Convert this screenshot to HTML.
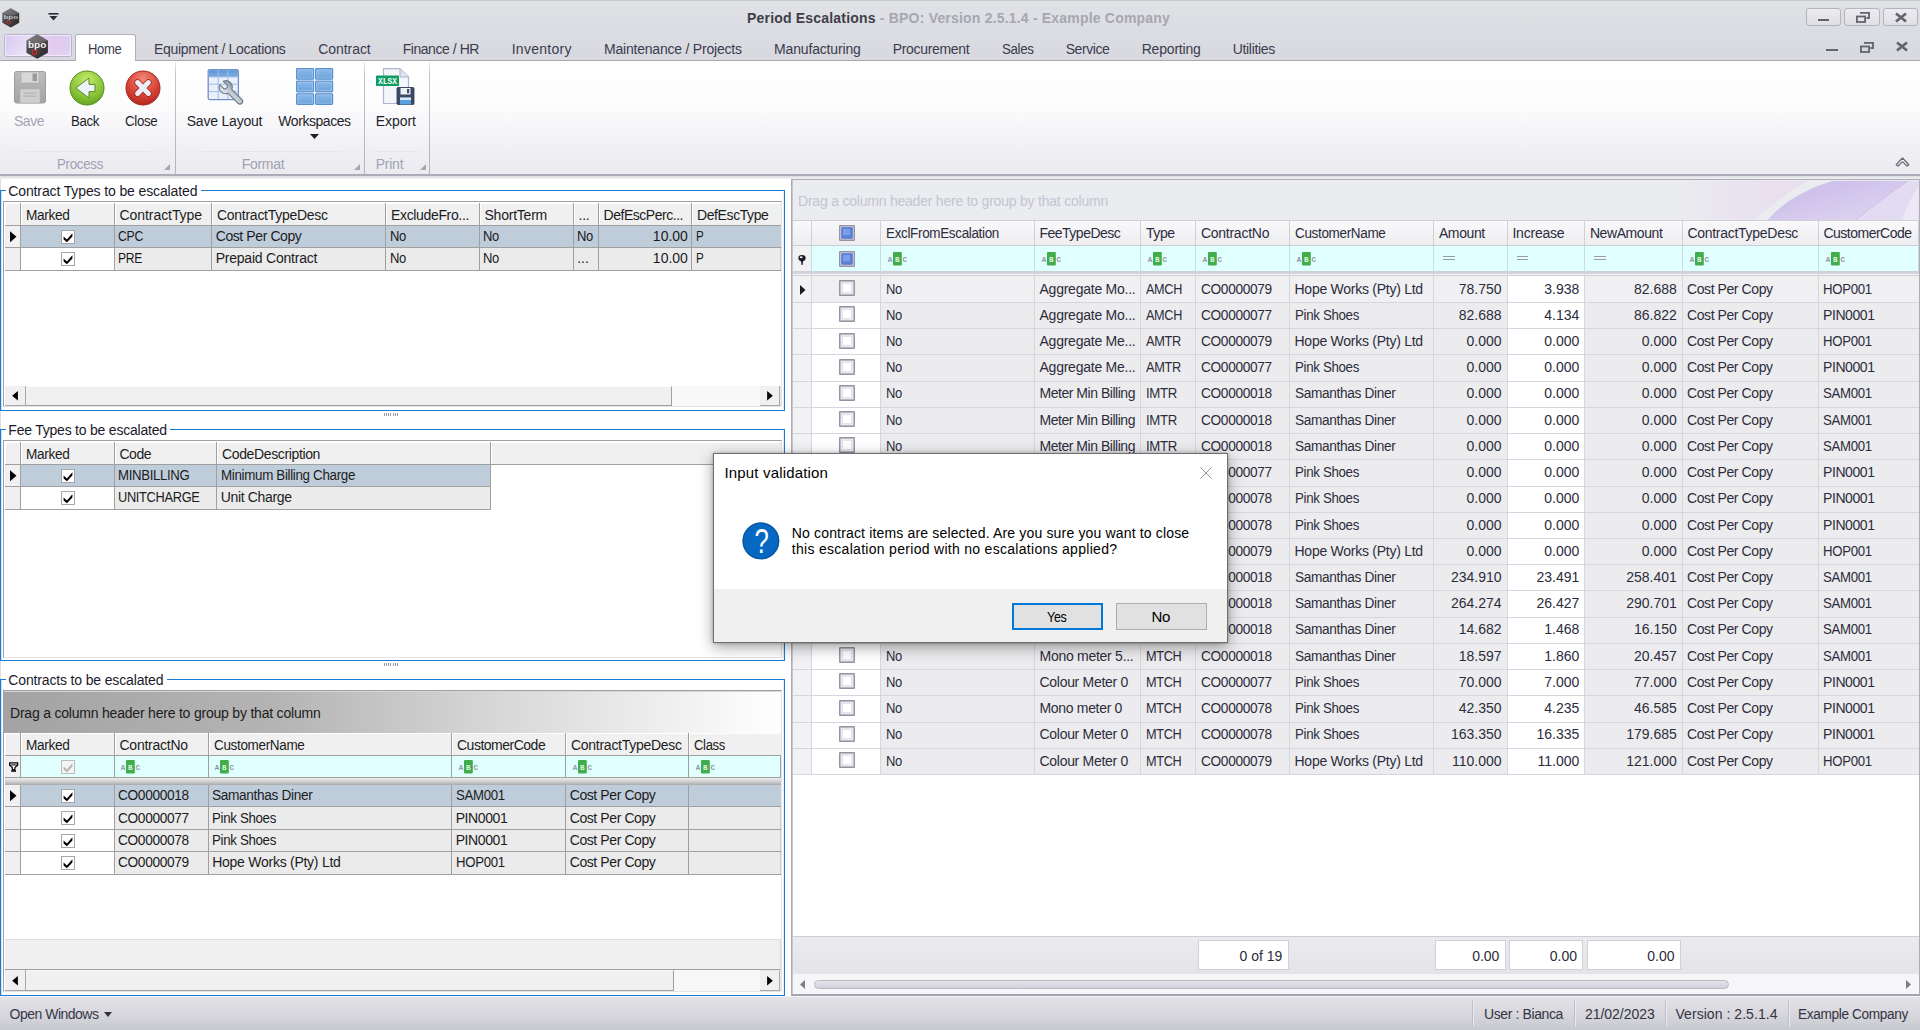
<!DOCTYPE html><html><head><meta charset="utf-8"><title>Period Escalations</title><style>
*{box-sizing:border-box;margin:0;padding:0}
html,body{width:1920px;height:1030px;overflow:hidden;background:#fff}
body{font-family:"Liberation Sans",sans-serif;font-size:14px;color:#1c1c1c;position:relative}
div{position:absolute}
.t{white-space:nowrap}
svg{position:absolute;overflow:visible}
</style></head><body>
<div style="left:0px;top:0px;width:1920px;height:61px;background:linear-gradient(#e1e2e6,#dcdde2 30px,#d8d9de 60px);"></div>
<div style="left:0px;top:0px;width:1920px;height:1px;background:#c9c9cf"></div>
<div style="left:0px;top:60px;width:1920px;height:1px;background:#a9a9b5"></div>
<svg style="left:2.4px;top:7.5px" width="17.5" height="19.8" viewBox="0 0 20 22.6"><defs><linearGradient id="hx2" x1="0" y1="0" x2="0.6" y2="1"><stop offset="0" stop-color="#7c7c7e"/><stop offset=".45" stop-color="#4c4c4e"/><stop offset="1" stop-color="#343436"/></linearGradient></defs><path d="M10 0.3 L19.6 5.8 L19.6 16.8 L10 22.3 L0.4 16.8 L0.4 5.8 Z" fill="url(#hx2)"/><path d="M10 0.3 L19.6 5.8 L10 9 L0.4 5.8Z" fill="#8e8e90" opacity=".45"/><path d="M10 22.3 L19.6 16.8 L19.6 5.8 L15 12Z" fill="#2a2a2c" opacity=".35"/><text x="10" y="12.6" font-family="Liberation Sans, sans-serif" font-weight="bold" font-size="7" fill="#c9c9c9" text-anchor="middle" textLength="16.5" lengthAdjust="spacingAndGlyphs">bpo</text><circle cx="7.6" cy="16.4" r="2" fill="none" stroke="#cc2a2a" stroke-width="1.1"/></svg>
<svg style="left:48px;top:13px" width="11" height="8" viewBox="0 0 11 8"><rect x="0.5" y="0" width="10" height="1.6" fill="#2a2a3c"/><path d="M1.5 3 L9.5 3 L5.5 7.6Z" fill="#2a2a3c"/></svg>
<div style="left:3.5px;top:34.3px;width:68px;height:23px;border:1px solid #b6b3ca;border-radius:2.5px;background:linear-gradient(#ddd0f0,#e0d6f4 50%,#ebe4f9 100%);"></div>
<div style="left:4.5px;top:35.3px;width:66px;height:21px;border:1px solid rgba(245,240,252,.8);border-radius:2px;background:linear-gradient(90deg,rgba(214,196,240,.5),rgba(240,232,250,.5) 35%,rgba(226,196,236,.75) 75%,rgba(220,200,240,.5))"></div>
<svg style="left:26px;top:33.8px" width="22.3" height="25.2" viewBox="0 0 20 22.6"><defs><linearGradient id="hx26" x1="0" y1="0" x2="0.6" y2="1"><stop offset="0" stop-color="#7c7c7e"/><stop offset=".45" stop-color="#4c4c4e"/><stop offset="1" stop-color="#343436"/></linearGradient></defs><path d="M10 0.3 L19.6 5.8 L19.6 16.8 L10 22.3 L0.4 16.8 L0.4 5.8 Z" fill="url(#hx26)"/><path d="M10 0.3 L19.6 5.8 L10 9 L0.4 5.8Z" fill="#8e8e90" opacity=".45"/><path d="M10 22.3 L19.6 16.8 L19.6 5.8 L15 12Z" fill="#2a2a2c" opacity=".35"/><text x="10" y="12.6" font-family="Liberation Sans, sans-serif" font-weight="bold" font-size="7.6" fill="#f2f2f2" text-anchor="middle" textLength="16.5" lengthAdjust="spacingAndGlyphs">bpo</text><circle cx="7.6" cy="16.4" r="2" fill="none" stroke="#cc2a2a" stroke-width="1.1"/></svg>
<div style="left:75px;top:34px;width:61px;height:28px;background:#fff;border:1px solid #b0b0bd;border-bottom:none;border-radius:3px 3px 0 0"></div>
<div class="t" style="letter-spacing:-0.35px;transform:scaleX(0.9316);transform-origin:0 0;left:88px;top:39.5px;line-height:18px;color:#3b3b4f">Home</div>
<div class="t" style="letter-spacing:-0.335px;left:154px;top:39.5px;line-height:18px;color:#3b3b4f">Equipment / Locations</div>
<div class="t" style="letter-spacing:-0.065px;left:318.3px;top:39.5px;line-height:18px;color:#3b3b4f">Contract</div>
<div class="t" style="letter-spacing:-0.450px;left:402.7px;top:39.5px;line-height:18px;color:#3b3b4f">Finance / HR</div>
<div class="t" style="letter-spacing:0.267px;left:511.7px;top:39.5px;line-height:18px;color:#3b3b4f">Inventory</div>
<div class="t" style="letter-spacing:-0.214px;left:604px;top:39.5px;line-height:18px;color:#3b3b4f">Maintenance / Projects</div>
<div class="t" style="letter-spacing:-0.155px;left:774px;top:39.5px;line-height:18px;color:#3b3b4f">Manufacturing</div>
<div class="t" style="letter-spacing:-0.323px;left:892.7px;top:39.5px;line-height:18px;color:#3b3b4f">Procurement</div>
<div class="t" style="letter-spacing:-0.35px;transform:scaleX(0.9495);transform-origin:0 0;left:1001.7px;top:39.5px;line-height:18px;color:#3b3b4f">Sales</div>
<div class="t" style="letter-spacing:-0.441px;left:1065.7px;top:39.5px;line-height:18px;color:#3b3b4f">Service</div>
<div class="t" style="letter-spacing:-0.189px;left:1141.7px;top:39.5px;line-height:18px;color:#3b3b4f">Reporting</div>
<div class="t" style="letter-spacing:-0.314px;left:1232.7px;top:39.5px;line-height:18px;color:#3b3b4f">Utilities</div>
<div class="t" style="letter-spacing:0.193px;left:747px;top:8.5px;line-height:18px;font-weight:bold;font-size:14px;color:#a6a6b1"><span style="color:#3e3e4a">Period Escalations</span> - BPO: Version 2.5.1.4 - Example Company</div>
<div style="left:1805.5px;top:7.5px;width:35px;height:18.5px;border:1px solid #b3b3bd;border-radius:3px;background:linear-gradient(#ececf0,#dfdfe4)"></div>
<div style="left:1844px;top:7.5px;width:35.5px;height:18.5px;border:1px solid #b3b3bd;border-radius:3px;background:linear-gradient(#ececf0,#dfdfe4)"></div>
<div style="left:1883px;top:7.5px;width:35px;height:18.5px;border:1px solid #b3b3bd;border-radius:3px;background:linear-gradient(#ececf0,#dfdfe4)"></div>
<div style="left:1817.5px;top:18.5px;width:11.5px;height:2.6px;background:#63636f"></div>
<svg style="left:1855.5px;top:11.5px" width="14" height="11" viewBox="0 0 14 11"><path d="M4 0.9 H13 V6 H10.5" fill="none" stroke="#63636f" stroke-width="1.8"/><rect x="0.9" y="4.5" width="8.2" height="5.5" fill="none" stroke="#63636f" stroke-width="1.8"/></svg>
<svg style="left:1894.5px;top:12.5px" width="12" height="9" viewBox="0 0 12 9"><path d="M1 0.5 L11 8.5 M11 0.5 L1 8.5" stroke="#63636f" stroke-width="2.7"/></svg>
<div style="left:1826px;top:48.5px;width:11.5px;height:2.6px;background:#63636f"></div>
<svg style="left:1860px;top:41.5px" width="14" height="11" viewBox="0 0 14 11"><path d="M4 0.9 H13 V6 H10.5" fill="none" stroke="#63636f" stroke-width="1.8"/><rect x="0.9" y="4.5" width="8.2" height="5.5" fill="none" stroke="#63636f" stroke-width="1.8"/></svg>
<svg style="left:1896px;top:42.2px" width="12" height="9" viewBox="0 0 12 9"><path d="M1 0.5 L11 8.5 M11 0.5 L1 8.5" stroke="#63636f" stroke-width="2.7"/></svg>
<div style="left:0px;top:179px;width:1px;height:817px;background:#dedede"></div>
<div style="left:0px;top:61px;width:1920px;height:113px;background:linear-gradient(#ffffff,#fdfdfe 35%,#f3f3f6 70%,#eaeaef 100%)"></div>
<div style="left:0px;top:173.5px;width:1920px;height:2px;background:#abacb8"></div>
<div style="left:0px;top:175.5px;width:1920px;height:3.5px;background:linear-gradient(#dcdce2,#f2f2f5)"></div>
<div style="left:175.0px;top:62px;width:1px;height:112px;background:linear-gradient(#e6e6ec,#c3c3cd 12%,#b4b4bf 100%)"></div>
<div style="left:364.0px;top:62px;width:1px;height:112px;background:linear-gradient(#e6e6ec,#c3c3cd 12%,#b4b4bf 100%)"></div>
<div style="left:428.8px;top:62px;width:1px;height:112px;background:linear-gradient(#e6e6ec,#c3c3cd 12%,#b4b4bf 100%)"></div>
<div style="left:8px;top:151px;width:160px;height:1px;background:linear-gradient(90deg,rgba(225,225,232,0),#e3e3ea 20%,#e3e3ea 80%,rgba(225,225,232,0))"></div>
<div style="left:184px;top:151px;width:174px;height:1px;background:linear-gradient(90deg,rgba(225,225,232,0),#e3e3ea 20%,#e3e3ea 80%,rgba(225,225,232,0))"></div>
<div style="left:372px;top:151px;width:51px;height:1px;background:linear-gradient(90deg,rgba(225,225,232,0),#e3e3ea 20%,#e3e3ea 80%,rgba(225,225,232,0))"></div>
<div class="t" style="letter-spacing:-0.35px;transform:scaleX(0.9558);transform-origin:0 0;left:56.7px;top:155px;line-height:18px;color:#a1a1b1">Process</div>
<div class="t" style="letter-spacing:-0.291px;left:241.7px;top:155px;line-height:18px;color:#a1a1b1">Format</div>
<div class="t" style="letter-spacing:-0.239px;left:375.7px;top:155px;line-height:18px;color:#a1a1b1">Print</div>
<svg style="left:164px;top:164px" width="6" height="6" viewBox="0 0 6 6"><path d="M6 0 V6 H0Z" fill="#a5a5b0"/></svg>
<svg style="left:354px;top:164px" width="6" height="6" viewBox="0 0 6 6"><path d="M6 0 V6 H0Z" fill="#a5a5b0"/></svg>
<svg style="left:419.5px;top:164px" width="6" height="6" viewBox="0 0 6 6"><path d="M6 0 V6 H0Z" fill="#a5a5b0"/></svg>
<div class="t" style="letter-spacing:-0.480px;left:14px;top:112px;line-height:18px;color:#a5a5b2">Save</div>
<div class="t" style="letter-spacing:-0.35px;transform:scaleX(0.9420);transform-origin:0 0;left:71.3px;top:112px;line-height:18px;color:#1f1f2b">Back</div>
<div class="t" style="letter-spacing:-0.35px;transform:scaleX(0.9516);transform-origin:0 0;left:125.3px;top:112px;line-height:18px;color:#1f1f2b">Close</div>
<div class="t" style="letter-spacing:-0.204px;left:186.7px;top:112px;line-height:18px;color:#1f1f2b">Save Layout</div>
<div class="t" style="letter-spacing:-0.438px;left:278.3px;top:112px;line-height:18px;color:#1f1f2b">Workspaces</div>
<div class="t" style="letter-spacing:-0.028px;left:375.7px;top:112px;line-height:18px;color:#1f1f2b">Export</div>
<svg style="left:310px;top:133.5px" width="9" height="5" viewBox="0 0 9 5"><path d="M0 0 H9 L4.5 5Z" fill="#1f1f2b"/></svg>
<svg style="left:1895px;top:155.5px" width="15" height="11" viewBox="0 0 15 11"><path d="M1.2 8.8 L7.5 2 L13.8 8.8 L12 10 L7.5 5.6 L3 10Z" fill="#fff" stroke="#6a6a78" stroke-width="1.3" stroke-linejoin="round"/></svg>
<svg style="left:14px;top:71px" width="32" height="33" viewBox="0 0 32 33"><defs><linearGradient id="fl" x1="0" y1="0" x2="0" y2="1"><stop offset="0" stop-color="#bdbdbd"/><stop offset="1" stop-color="#a4a4a4"/></linearGradient></defs><rect x="0.5" y="0.5" width="31" height="31.5" rx="2" fill="url(#fl)" stroke="#9c9c9c"/><rect x="7" y="1" width="18" height="11" fill="#d8d8d8" stroke="#a8a8a8" stroke-width=".6"/><rect x="18.5" y="2.5" width="4.5" height="7.5" fill="#9a9a9a"/><rect x="6" y="18" width="20" height="14" fill="#cfcfcf" stroke="#b0b0b0" stroke-width=".6"/><rect x="9.5" y="21.5" width="13" height="1.3" fill="#b4b4b4"/><rect x="9.5" y="24.5" width="13" height="1.3" fill="#b4b4b4"/></svg>
<svg style="left:68.5px;top:69.6px" width="36" height="36" viewBox="0 0 36 36"><defs><radialGradient id="gr" cx=".5" cy=".25" r=".8"><stop offset="0" stop-color="#c4e868"/><stop offset=".6" stop-color="#8cc63a"/><stop offset="1" stop-color="#5e9e1e"/></radialGradient></defs><circle cx="18" cy="18" r="17" fill="url(#gr)" stroke="#4f8a1a" stroke-width="1"/><path d="M6.8 18 L20 8 V14.4 H26 V21.6 H20 V28Z" fill="#eef3fb" stroke="#4f8f1c" stroke-width="1" stroke-linejoin="round"/></svg>
<svg style="left:124.5px;top:69.6px" width="36" height="36" viewBox="0 0 36 36"><defs><radialGradient id="rd" cx=".5" cy=".25" r=".8"><stop offset="0" stop-color="#f0897a"/><stop offset=".55" stop-color="#d9463a"/><stop offset="1" stop-color="#b0241a"/></radialGradient></defs><circle cx="18" cy="18" r="17" fill="url(#rd)" stroke="#a3241c" stroke-width="1"/><path d="M12.6 12.6 L23.4 23.4 M23.4 12.6 L12.6 23.4" stroke="#b3281f" stroke-width="6.6" stroke-linecap="round"/><path d="M12.6 12.6 L23.4 23.4 M23.4 12.6 L12.6 23.4" stroke="#eaeef6" stroke-width="5" stroke-linecap="round"/></svg>
<svg style="left:207px;top:68px" width="38" height="38" viewBox="0 0 38 38"><defs><linearGradient id="tb" x1="0" y1="0" x2="0" y2="1"><stop offset="0" stop-color="#5f9ad8"/><stop offset="1" stop-color="#86b6e6"/></linearGradient><linearGradient id="wr" x1="0" y1="0" x2="1" y2="0"><stop offset="0" stop-color="#e6eaef"/><stop offset=".5" stop-color="#c3cbd5"/><stop offset="1" stop-color="#8d97a5"/></linearGradient></defs><rect x="1.2" y="1.6" width="30.2" height="30" rx="1.6" fill="#e9f0fa" stroke="#7590c8" stroke-width="1.3"/><rect x="1.9" y="2.3" width="28.8" height="6.6" fill="#71a5de"/><rect x="1.9" y="2.3" width="28.8" height="2.4" fill="#639bd8"/><path d="M1.9 8.9 H30.7 M1.9 16.2 H30.7 M1.9 23.6 H30.7 M11.2 2.3 V31 M20.8 2.3 V31" stroke="#a3bce2" stroke-width="1"/><g transform="translate(18.8 19.2) rotate(-45)"><path d="M-2.4 -1.2 L-2.4 -6 A6.4 6.4 0 0 0 -2.7 5.8 L-2.7 20 A2.7 2.7 0 0 0 2.7 20 L2.7 5.8 A6.4 6.4 0 0 0 2.4 -6 L2.4 -1.2 A2.4 2.4 0 0 1 -2.4 -1.2Z" fill="url(#wr)" stroke="#707b8a" stroke-width="1.1" stroke-linejoin="round"/></g></svg>
<svg style="left:296px;top:68.2px" width="37" height="37" viewBox="0 0 37 37"><defs><linearGradient id="ws" x1="0" y1="0" x2="0" y2="1"><stop offset="0" stop-color="#8dbaea"/><stop offset="1" stop-color="#6aa2dc"/></linearGradient></defs><rect x="0.6" y="0.6" width="17" height="10.6" rx=".8" fill="url(#ws)" stroke="#5a90d0" stroke-width="1.2"/><rect x="1.8" y="1.8" width="14.6" height="8.2" fill="none" stroke="#a5c8ee" stroke-width=".8" opacity=".8"/><rect x="19.6" y="0.6" width="17" height="10.6" rx=".8" fill="url(#ws)" stroke="#5a90d0" stroke-width="1.2"/><rect x="20.8" y="1.8" width="14.6" height="8.2" fill="none" stroke="#a5c8ee" stroke-width=".8" opacity=".8"/><rect x="0.6" y="13.2" width="17" height="10.6" rx=".8" fill="url(#ws)" stroke="#5a90d0" stroke-width="1.2"/><rect x="1.8" y="14.4" width="14.6" height="8.2" fill="none" stroke="#a5c8ee" stroke-width=".8" opacity=".8"/><rect x="19.6" y="13.2" width="17" height="10.6" rx=".8" fill="url(#ws)" stroke="#5a90d0" stroke-width="1.2"/><rect x="20.8" y="14.4" width="14.6" height="8.2" fill="none" stroke="#a5c8ee" stroke-width=".8" opacity=".8"/><rect x="0.6" y="25.8" width="17" height="10.6" rx=".8" fill="url(#ws)" stroke="#5a90d0" stroke-width="1.2"/><rect x="1.8" y="27.0" width="14.6" height="8.2" fill="none" stroke="#a5c8ee" stroke-width=".8" opacity=".8"/><rect x="19.6" y="25.8" width="17" height="10.6" rx=".8" fill="url(#ws)" stroke="#5a90d0" stroke-width="1.2"/><rect x="20.8" y="27.0" width="14.6" height="8.2" fill="none" stroke="#a5c8ee" stroke-width=".8" opacity=".8"/></svg>
<svg style="left:376px;top:68px" width="39" height="38" viewBox="0 0 39 38"><path d="M7.5 0.7 H24 L32.5 9 V35.5 H7.5Z" fill="#f4f6fb" stroke="#aab4cc" stroke-width="1.2"/><path d="M24 0.7 V9 H32.5" fill="#dfe4f0" stroke="#aab4cc" stroke-width="1"/><rect x="0" y="7.5" width="23" height="10.5" rx=".8" fill="#0f9d62"/><text x="11.5" y="15.8" font-family="Liberation Mono, monospace" font-weight="bold" font-size="8.6" fill="#fff" text-anchor="middle" textLength="19" lengthAdjust="spacingAndGlyphs">XLSX</text><rect x="21" y="19.5" width="17" height="17" rx="1" fill="#3d4a66" stroke="#2b3650" stroke-width=".8"/><rect x="24.5" y="20" width="10" height="6.5" fill="#eef2f8"/><rect x="31" y="21" width="2.2" height="4.2" fill="#3d4a66"/><rect x="24" y="29.5" width="11" height="7" fill="#5b9fe0"/><rect x="24" y="29.5" width="11" height="2.5" fill="#d8e8f8"/></svg>
<div style="left:0px;top:190px;width:6px;height:1px;background:#1c7ad6"></div>
<div style="left:200.5px;top:190px;width:584.5px;height:1px;background:#1c7ad6"></div>
<div style="left:0px;top:190px;width:1px;height:221px;background:#1c7ad6"></div>
<div style="left:784px;top:190px;width:1px;height:221px;background:#1c7ad6"></div>
<div style="left:0px;top:410px;width:785px;height:1px;background:#1c7ad6"></div>
<div style="left:1px;top:191px;width:1px;height:219px;background:#cfe3f7"></div>
<div style="left:783px;top:191px;width:1px;height:219px;background:#e2eefa"></div>
<div class="t" style="letter-spacing:-0.125px;top:182.25px;line-height:18px;color:#1a1a2a;left:8.3px;">Contract Types to be escalated</div>
<div style="left:3px;top:201px;width:778.5px;height:206px;border:1px solid #a0a0a0;border-right-color:#e3e3e3;border-bottom-color:#e3e3e3;background:#fff"></div>
<div style="left:4.5px;top:202.5px;width:776.0px;height:22.5px;background:#f0f0f0"></div>
<div style="left:4.5px;top:225.0px;width:776.0px;height:1px;background:#a0a0a0"></div>
<div style="left:19.5px;top:202.5px;width:1px;height:22.5px;background:#a0a0a0"></div>
<div style="left:5.0px;top:202.5px;width:1px;height:22.5px;background:#fff"></div>
<div style="left:5.0px;top:202.5px;width:14.5px;height:1px;background:#fff"></div>
<div style="left:113.5px;top:202.5px;width:1px;height:22.5px;background:#a0a0a0"></div>
<div style="left:20.5px;top:202.5px;width:1px;height:22.5px;background:#fff"></div>
<div style="left:20.5px;top:202.5px;width:93px;height:1px;background:#fff"></div>
<div class="t" style="letter-spacing:-0.35px;transform:scaleX(0.9756);transform-origin:0 0;top:205.85px;line-height:18px;left:25.5px;">Marked</div>
<div style="left:211.0px;top:202.5px;width:1px;height:22.5px;background:#a0a0a0"></div>
<div style="left:114.5px;top:202.5px;width:1px;height:22.5px;background:#fff"></div>
<div style="left:114.5px;top:202.5px;width:96.5px;height:1px;background:#fff"></div>
<div class="t" style="letter-spacing:-0.064px;top:205.85px;line-height:18px;left:119.5px;">ContractType</div>
<div style="left:385.0px;top:202.5px;width:1px;height:22.5px;background:#a0a0a0"></div>
<div style="left:212.0px;top:202.5px;width:1px;height:22.5px;background:#fff"></div>
<div style="left:212.0px;top:202.5px;width:173.0px;height:1px;background:#fff"></div>
<div class="t" style="letter-spacing:-0.273px;top:205.85px;line-height:18px;left:217.0px;">ContractTypeDesc</div>
<div style="left:478.5px;top:202.5px;width:1px;height:22.5px;background:#a0a0a0"></div>
<div style="left:386.0px;top:202.5px;width:1px;height:22.5px;background:#fff"></div>
<div style="left:386.0px;top:202.5px;width:92.5px;height:1px;background:#fff"></div>
<div class="t" style="letter-spacing:-0.345px;top:205.85px;line-height:18px;left:391.0px;">ExcludeFro...</div>
<div style="left:572.5px;top:202.5px;width:1px;height:22.5px;background:#a0a0a0"></div>
<div style="left:479.5px;top:202.5px;width:1px;height:22.5px;background:#fff"></div>
<div style="left:479.5px;top:202.5px;width:93px;height:1px;background:#fff"></div>
<div class="t" style="letter-spacing:-0.231px;top:205.85px;line-height:18px;left:484.5px;">ShortTerm</div>
<div style="left:597.5px;top:202.5px;width:1px;height:22.5px;background:#a0a0a0"></div>
<div style="left:573.5px;top:202.5px;width:1px;height:22.5px;background:#fff"></div>
<div style="left:573.5px;top:202.5px;width:24px;height:1px;background:#fff"></div>
<div class="t" style="letter-spacing:-0.224px;top:205.85px;line-height:18px;left:578.5px;">...</div>
<div style="left:691.0px;top:202.5px;width:1px;height:22.5px;background:#a0a0a0"></div>
<div style="left:598.5px;top:202.5px;width:1px;height:22.5px;background:#fff"></div>
<div style="left:598.5px;top:202.5px;width:92.5px;height:1px;background:#fff"></div>
<div class="t" style="letter-spacing:-0.469px;top:205.85px;line-height:18px;left:603.5px;">DefEscPerc...</div>
<div style="left:692.0px;top:202.5px;width:1px;height:22.5px;background:#fff"></div>
<div style="left:692.0px;top:202.5px;width:88.0px;height:1px;background:#fff"></div>
<div class="t" style="letter-spacing:-0.398px;top:205.85px;line-height:18px;left:697.0px;">DefEscType</div>
<div style="left:4.5px;top:226px;width:776.0px;height:21.3px;background:#bfcddb"></div>
<div style="left:4.5px;top:226px;width:15.5px;height:21.3px;background:#f0f0f0"></div>
<svg style="left:9.7px;top:231px" width="6.5" height="11.5" viewBox="0 0 7 12"><path d="M0 0 L7 6 L0 12Z" fill="#000"/></svg>
<svg style="left:61px;top:230px" width="14" height="14" viewBox="0 0 14 14"><rect x=".5" y=".5" width="13" height="13" fill="#fff" stroke="#a6a6a6"/><path d="M2.6 6.4 L5.9 9.4 L11.4 3.2 L11.4 6.4 L5.9 12.3 L2.6 9.4Z" fill="#000"/></svg>
<div style="left:19.5px;top:226px;width:1px;height:21.3px;background:#a0a0a0"></div>
<div style="left:113.5px;top:226px;width:1px;height:21.3px;background:#a0a0a0"></div>
<div style="left:211.0px;top:226px;width:1px;height:21.3px;background:#a0a0a0"></div>
<div style="left:385.0px;top:226px;width:1px;height:21.3px;background:#a0a0a0"></div>
<div style="left:478.5px;top:226px;width:1px;height:21.3px;background:#a0a0a0"></div>
<div style="left:572.5px;top:226px;width:1px;height:21.3px;background:#a0a0a0"></div>
<div style="left:597.5px;top:226px;width:1px;height:21.3px;background:#a0a0a0"></div>
<div style="left:691.0px;top:226px;width:1px;height:21.3px;background:#a0a0a0"></div>
<div style="left:780.0px;top:226px;width:1px;height:21.3px;background:#cfcfcf"></div>
<div class="t" style="letter-spacing:-0.35px;transform:scaleX(0.8768);transform-origin:0 0;top:227.15px;line-height:18px;left:118.2px;">CPC</div>
<div class="t" style="letter-spacing:-0.404px;top:227.15px;line-height:18px;left:215.7px;">Cost Per Copy</div>
<div class="t" style="letter-spacing:-0.35px;transform:scaleX(0.9299);transform-origin:0 0;top:227.15px;line-height:18px;left:389.7px;">No</div>
<div class="t" style="letter-spacing:-0.35px;transform:scaleX(0.9299);transform-origin:0 0;top:227.15px;line-height:18px;left:483.2px;">No</div>
<div class="t" style="letter-spacing:-0.35px;transform:scaleX(0.9299);transform-origin:0 0;top:227.15px;line-height:18px;left:577.2px;">No</div>
<div class="t" style="top:227.15px;line-height:18px;right:1232.1px;">10.00</div>
<div class="t" style="letter-spacing:-0.35px;transform:scaleX(0.8339);transform-origin:0 0;top:227.15px;line-height:18px;left:695.7px;">P</div>
<div style="left:4.5px;top:247.3px;width:776.0px;height:1px;background:#a0a0a0"></div>
<div style="left:4.5px;top:248.3px;width:776.0px;height:21.3px;background:#ebebeb"></div>
<div style="left:4.5px;top:248.3px;width:15.5px;height:21.3px;background:#f0f0f0"></div>
<div style="left:20px;top:248.3px;width:94px;height:21.3px;background:#fff"></div>
<svg style="left:61px;top:252.3px" width="14" height="14" viewBox="0 0 14 14"><rect x=".5" y=".5" width="13" height="13" fill="#fff" stroke="#a6a6a6"/><path d="M2.6 6.4 L5.9 9.4 L11.4 3.2 L11.4 6.4 L5.9 12.3 L2.6 9.4Z" fill="#000"/></svg>
<div style="left:19.5px;top:248.3px;width:1px;height:21.3px;background:#a0a0a0"></div>
<div style="left:113.5px;top:248.3px;width:1px;height:21.3px;background:#a0a0a0"></div>
<div style="left:211.0px;top:248.3px;width:1px;height:21.3px;background:#a0a0a0"></div>
<div style="left:385.0px;top:248.3px;width:1px;height:21.3px;background:#a0a0a0"></div>
<div style="left:478.5px;top:248.3px;width:1px;height:21.3px;background:#a0a0a0"></div>
<div style="left:572.5px;top:248.3px;width:1px;height:21.3px;background:#a0a0a0"></div>
<div style="left:597.5px;top:248.3px;width:1px;height:21.3px;background:#a0a0a0"></div>
<div style="left:691.0px;top:248.3px;width:1px;height:21.3px;background:#a0a0a0"></div>
<div style="left:780.0px;top:248.3px;width:1px;height:21.3px;background:#cfcfcf"></div>
<div class="t" style="letter-spacing:-0.35px;transform:scaleX(0.8650);transform-origin:0 0;top:249.45px;line-height:18px;left:118.2px;">PRE</div>
<div class="t" style="letter-spacing:-0.223px;top:249.45px;line-height:18px;left:215.7px;">Prepaid Contract</div>
<div class="t" style="letter-spacing:-0.35px;transform:scaleX(0.9299);transform-origin:0 0;top:249.45px;line-height:18px;left:389.7px;">No</div>
<div class="t" style="letter-spacing:-0.35px;transform:scaleX(0.9299);transform-origin:0 0;top:249.45px;line-height:18px;left:483.2px;">No</div>
<div class="t" style="top:249.45px;line-height:18px;left:577.2px;">...</div>
<div class="t" style="top:249.45px;line-height:18px;right:1232.1px;">10.00</div>
<div class="t" style="letter-spacing:-0.35px;transform:scaleX(0.8339);transform-origin:0 0;top:249.45px;line-height:18px;left:695.7px;">P</div>
<div style="left:4.5px;top:269.6px;width:776.0px;height:1px;background:#a0a0a0"></div>
<div style="left:4.5px;top:385.5px;width:776px;height:20px;background:#e8e8e8"></div>
<div style="left:672px;top:385.5px;width:87.5px;height:20px;background:#f8f8f8"></div>
<div style="left:4.5px;top:385.5px;width:21px;height:20px;background:#f0f0f0;border-right:1px solid #a8a8a8;border-bottom:1px solid #a8a8a8"></div>
<div style="left:25.5px;top:385.5px;width:646.5px;height:20px;background:#f0f0f0;border-right:1px solid #a0a0a0;border-bottom:1px solid #a0a0a0;border-top:1px solid #fafafa"></div>
<div style="left:759.5px;top:386.0px;width:20.5px;height:19.5px;background:#f0f0f0;border-right:1px solid #a8a8a8;border-bottom:1px solid #a8a8a8"></div>
<svg style="left:12px;top:390.8px" width="6" height="9.5" viewBox="0 0 6 10"><path d="M6 0 L0 5 L6 10Z" fill="#000"/></svg>
<svg style="left:767px;top:390.8px" width="6" height="9.5" viewBox="0 0 6 10"><path d="M0 0 L6 5 L0 10Z" fill="#000"/></svg>
<div style="left:383.5px;top:413px;width:1px;height:2.6px;background:#9a9aa8"></div>
<div style="left:385.8px;top:413px;width:1px;height:2.6px;background:#9a9aa8"></div>
<div style="left:388.1px;top:413px;width:1px;height:2.6px;background:#9a9aa8"></div>
<div style="left:390.4px;top:413px;width:1px;height:2.6px;background:#9a9aa8"></div>
<div style="left:392.7px;top:413px;width:1px;height:2.6px;background:#9a9aa8"></div>
<div style="left:395.0px;top:413px;width:1px;height:2.6px;background:#9a9aa8"></div>
<div style="left:397.3px;top:413px;width:1px;height:2.6px;background:#9a9aa8"></div>
<div style="left:0px;top:429px;width:6px;height:1px;background:#1c7ad6"></div>
<div style="left:170.0px;top:429px;width:615.0px;height:1px;background:#1c7ad6"></div>
<div style="left:0px;top:429px;width:1px;height:232px;background:#1c7ad6"></div>
<div style="left:784px;top:429px;width:1px;height:232px;background:#1c7ad6"></div>
<div style="left:0px;top:660px;width:785px;height:1px;background:#1c7ad6"></div>
<div style="left:1px;top:430px;width:1px;height:230px;background:#cfe3f7"></div>
<div style="left:783px;top:430px;width:1px;height:230px;background:#e2eefa"></div>
<div class="t" style="letter-spacing:-0.219px;top:421.25px;line-height:18px;color:#1a1a2a;left:8.3px;">Fee Types to be escalated</div>
<div style="left:3px;top:440px;width:778.5px;height:217.5px;border:1px solid #a0a0a0;border-right-color:#e3e3e3;border-bottom-color:#e3e3e3;background:#fff"></div>
<div style="left:4.5px;top:441.5px;width:776.0px;height:22.5px;background:#f0f0f0"></div>
<div style="left:4.5px;top:464.0px;width:776.0px;height:1px;background:#a0a0a0"></div>
<div style="left:19.5px;top:441.5px;width:1px;height:22.5px;background:#a0a0a0"></div>
<div style="left:5.0px;top:441.5px;width:1px;height:22.5px;background:#fff"></div>
<div style="left:5.0px;top:441.5px;width:14.5px;height:1px;background:#fff"></div>
<div style="left:113.5px;top:441.5px;width:1px;height:22.5px;background:#a0a0a0"></div>
<div style="left:20.5px;top:441.5px;width:1px;height:22.5px;background:#fff"></div>
<div style="left:20.5px;top:441.5px;width:93px;height:1px;background:#fff"></div>
<div class="t" style="letter-spacing:-0.35px;transform:scaleX(0.9756);transform-origin:0 0;top:444.85px;line-height:18px;left:25.5px;">Marked</div>
<div style="left:216.0px;top:441.5px;width:1px;height:22.5px;background:#a0a0a0"></div>
<div style="left:114.5px;top:441.5px;width:1px;height:22.5px;background:#fff"></div>
<div style="left:114.5px;top:441.5px;width:101.5px;height:1px;background:#fff"></div>
<div class="t" style="letter-spacing:-0.492px;top:444.85px;line-height:18px;left:119.5px;">Code</div>
<div style="left:490.0px;top:441.5px;width:1px;height:22.5px;background:#a0a0a0"></div>
<div style="left:217.0px;top:441.5px;width:1px;height:22.5px;background:#fff"></div>
<div style="left:217.0px;top:441.5px;width:273.0px;height:1px;background:#fff"></div>
<div class="t" style="letter-spacing:-0.367px;top:444.85px;line-height:18px;left:222.0px;">CodeDescription</div>
<div style="left:491.0px;top:441.5px;width:1px;height:22.5px;background:#fff"></div>
<div style="left:491.0px;top:441.5px;width:289.0px;height:1px;background:#fff"></div>
<div style="left:4.5px;top:465px;width:486.0px;height:21.3px;background:#bfcddb"></div>
<div style="left:4.5px;top:465px;width:15.5px;height:21.3px;background:#f0f0f0"></div>
<svg style="left:9.7px;top:470px" width="6.5" height="11.5" viewBox="0 0 7 12"><path d="M0 0 L7 6 L0 12Z" fill="#000"/></svg>
<svg style="left:61px;top:469px" width="14" height="14" viewBox="0 0 14 14"><rect x=".5" y=".5" width="13" height="13" fill="#fff" stroke="#a6a6a6"/><path d="M2.6 6.4 L5.9 9.4 L11.4 3.2 L11.4 6.4 L5.9 12.3 L2.6 9.4Z" fill="#000"/></svg>
<div style="left:19.5px;top:465px;width:1px;height:21.3px;background:#a0a0a0"></div>
<div style="left:113.5px;top:465px;width:1px;height:21.3px;background:#a0a0a0"></div>
<div style="left:216.0px;top:465px;width:1px;height:21.3px;background:#a0a0a0"></div>
<div style="left:490.0px;top:465px;width:1px;height:21.3px;background:#a0a0a0"></div>
<div class="t" style="letter-spacing:-0.35px;transform:scaleX(0.9425);transform-origin:0 0;top:466.15px;line-height:18px;left:118.2px;">MINBILLING</div>
<div class="t" style="letter-spacing:-0.35px;transform:scaleX(0.9563);transform-origin:0 0;top:466.15px;line-height:18px;left:220.7px;">Minimum Billing Charge</div>
<div style="left:4.5px;top:486.3px;width:486.0px;height:1px;background:#a0a0a0"></div>
<div style="left:4.5px;top:487.3px;width:486.0px;height:21.3px;background:#ebebeb"></div>
<div style="left:4.5px;top:487.3px;width:15.5px;height:21.3px;background:#f0f0f0"></div>
<div style="left:20px;top:487.3px;width:94px;height:21.3px;background:#fff"></div>
<svg style="left:61px;top:491.3px" width="14" height="14" viewBox="0 0 14 14"><rect x=".5" y=".5" width="13" height="13" fill="#fff" stroke="#a6a6a6"/><path d="M2.6 6.4 L5.9 9.4 L11.4 3.2 L11.4 6.4 L5.9 12.3 L2.6 9.4Z" fill="#000"/></svg>
<div style="left:19.5px;top:487.3px;width:1px;height:21.3px;background:#a0a0a0"></div>
<div style="left:113.5px;top:487.3px;width:1px;height:21.3px;background:#a0a0a0"></div>
<div style="left:216.0px;top:487.3px;width:1px;height:21.3px;background:#a0a0a0"></div>
<div style="left:490.0px;top:487.3px;width:1px;height:21.3px;background:#a0a0a0"></div>
<div class="t" style="letter-spacing:-0.35px;transform:scaleX(0.9151);transform-origin:0 0;top:488.45px;line-height:18px;left:118.2px;">UNITCHARGE</div>
<div class="t" style="letter-spacing:-0.337px;top:488.45px;line-height:18px;left:220.7px;">Unit Charge</div>
<div style="left:4.5px;top:508.6px;width:486.0px;height:1px;background:#a0a0a0"></div>
<div style="left:383.5px;top:663px;width:1px;height:2.6px;background:#9a9aa8"></div>
<div style="left:385.8px;top:663px;width:1px;height:2.6px;background:#9a9aa8"></div>
<div style="left:388.1px;top:663px;width:1px;height:2.6px;background:#9a9aa8"></div>
<div style="left:390.4px;top:663px;width:1px;height:2.6px;background:#9a9aa8"></div>
<div style="left:392.7px;top:663px;width:1px;height:2.6px;background:#9a9aa8"></div>
<div style="left:395.0px;top:663px;width:1px;height:2.6px;background:#9a9aa8"></div>
<div style="left:397.3px;top:663px;width:1px;height:2.6px;background:#9a9aa8"></div>
<div style="left:0px;top:679px;width:6px;height:1px;background:#1c7ad6"></div>
<div style="left:166.5px;top:679px;width:618.5px;height:1px;background:#1c7ad6"></div>
<div style="left:0px;top:679px;width:1px;height:317px;background:#1c7ad6"></div>
<div style="left:784px;top:679px;width:1px;height:317px;background:#1c7ad6"></div>
<div style="left:0px;top:995px;width:785px;height:1px;background:#1c7ad6"></div>
<div style="left:1px;top:680px;width:1px;height:315px;background:#cfe3f7"></div>
<div style="left:783px;top:680px;width:1px;height:315px;background:#e2eefa"></div>
<div class="t" style="letter-spacing:-0.151px;top:671.25px;line-height:18px;color:#1a1a2a;left:8.3px;">Contracts to be escalated</div>
<div style="left:3px;top:690px;width:778.5px;height:302px;border:1px solid #a0a0a0;border-right-color:#e3e3e3;border-bottom-color:#e3e3e3;background:#fff"></div>
<div style="left:4px;top:691px;width:776.5px;height:42px;border-top:1px solid #d6d6d6;background:linear-gradient(90deg,#a3a3a3 0%,#b4b4b4 35%,#d9d9d9 65%,#f4f4f4 90%,#ffffff 100%)"></div>
<div class="t" style="letter-spacing:-0.207px;top:704.45px;line-height:18px;color:#1b1b1b;left:10.0px;">Drag a column header here to group by that column</div>
<div style="left:4.5px;top:733px;width:776px;height:22px;background:#f0f0f0"></div>
<div style="left:4.5px;top:755px;width:776px;height:1px;background:#a0a0a0"></div>
<div style="left:19.5px;top:733px;width:1px;height:22px;background:#a0a0a0"></div>
<div style="left:5.0px;top:733px;width:1px;height:22px;background:#fff"></div>
<div style="left:5.0px;top:733px;width:14.5px;height:1px;background:#fff"></div>
<div style="left:113.5px;top:733px;width:1px;height:22px;background:#a0a0a0"></div>
<div style="left:20.5px;top:733px;width:1px;height:22px;background:#fff"></div>
<div style="left:20.5px;top:733px;width:93px;height:1px;background:#fff"></div>
<div class="t" style="letter-spacing:-0.35px;transform:scaleX(0.9756);transform-origin:0 0;top:736.35px;line-height:18px;left:25.5px;">Marked</div>
<div style="left:207.5px;top:733px;width:1px;height:22px;background:#a0a0a0"></div>
<div style="left:114.5px;top:733px;width:1px;height:22px;background:#fff"></div>
<div style="left:114.5px;top:733px;width:93px;height:1px;background:#fff"></div>
<div class="t" style="letter-spacing:-0.251px;top:736.35px;line-height:18px;left:119.5px;">ContractNo</div>
<div style="left:451.0px;top:733px;width:1px;height:22px;background:#a0a0a0"></div>
<div style="left:208.5px;top:733px;width:1px;height:22px;background:#fff"></div>
<div style="left:208.5px;top:733px;width:242.5px;height:1px;background:#fff"></div>
<div class="t" style="letter-spacing:-0.35px;transform:scaleX(0.9645);transform-origin:0 0;top:736.35px;line-height:18px;left:213.5px;">CustomerName</div>
<div style="left:565.0px;top:733px;width:1px;height:22px;background:#a0a0a0"></div>
<div style="left:452.0px;top:733px;width:1px;height:22px;background:#fff"></div>
<div style="left:452.0px;top:733px;width:113.0px;height:1px;background:#fff"></div>
<div class="t" style="letter-spacing:-0.496px;top:736.35px;line-height:18px;left:457.0px;">CustomerCode</div>
<div style="left:688.0px;top:733px;width:1px;height:22px;background:#a0a0a0"></div>
<div style="left:566.0px;top:733px;width:1px;height:22px;background:#fff"></div>
<div style="left:566.0px;top:733px;width:122.0px;height:1px;background:#fff"></div>
<div class="t" style="letter-spacing:-0.273px;top:736.35px;line-height:18px;left:571.0px;">ContractTypeDesc</div>
<div style="left:689.0px;top:733px;width:1px;height:22px;background:#fff"></div>
<div style="left:689.0px;top:733px;width:91.0px;height:1px;background:#fff"></div>
<div class="t" style="letter-spacing:-0.35px;transform:scaleX(0.9319);transform-origin:0 0;top:736.35px;line-height:18px;left:694.0px;">Class</div>
<div style="left:4.5px;top:756px;width:776px;height:21px;background:#e0ffff"></div>
<div style="left:4.5px;top:756px;width:15.5px;height:21px;background:#f0f0f0"></div>
<div style="left:19.5px;top:756px;width:1px;height:21px;background:#a0a0a0"></div>
<div style="left:113.5px;top:756px;width:1px;height:21px;background:#a0a0a0"></div>
<div style="left:207.5px;top:756px;width:1px;height:21px;background:#a0a0a0"></div>
<div style="left:451.0px;top:756px;width:1px;height:21px;background:#a0a0a0"></div>
<div style="left:565.0px;top:756px;width:1px;height:21px;background:#a0a0a0"></div>
<div style="left:688.0px;top:756px;width:1px;height:21px;background:#a0a0a0"></div>
<div style="left:780.0px;top:756px;width:1px;height:21px;background:#a0a0a0"></div>
<div style="left:4.5px;top:777px;width:776px;height:1px;background:#a0a0a0"></div>
<svg style="left:61px;top:759.7px" width="14" height="14" viewBox="0 0 14 14"><rect x=".5" y=".5" width="13" height="13" fill="#f4f4f4" stroke="#bdbdbd"/><path d="M2.6 6.4 L5.9 9.4 L11.4 3.2 L11.4 6.4 L5.9 12.3 L2.6 9.4Z" fill="#b5b5b5"/></svg>
<svg style="left:120px;top:760px" width="20" height="14" viewBox="0 0 20 14"><rect x="6" y="0" width="8.8" height="13.6" rx="1" fill="#41ad4a"/><text x="3" y="9.8" font-family="Liberation Mono, monospace" font-weight="bold" font-size="7.6" fill="#9696a2" text-anchor="middle">A</text><text x="10.4" y="9.8" font-family="Liberation Mono, monospace" font-weight="bold" font-size="7.6" fill="#dff5e0" text-anchor="middle">B</text><text x="17.8" y="9.8" font-family="Liberation Mono, monospace" font-weight="bold" font-size="7.6" fill="#9696a2" text-anchor="middle">C</text></svg>
<svg style="left:214px;top:760px" width="20" height="14" viewBox="0 0 20 14"><rect x="6" y="0" width="8.8" height="13.6" rx="1" fill="#41ad4a"/><text x="3" y="9.8" font-family="Liberation Mono, monospace" font-weight="bold" font-size="7.6" fill="#9696a2" text-anchor="middle">A</text><text x="10.4" y="9.8" font-family="Liberation Mono, monospace" font-weight="bold" font-size="7.6" fill="#dff5e0" text-anchor="middle">B</text><text x="17.8" y="9.8" font-family="Liberation Mono, monospace" font-weight="bold" font-size="7.6" fill="#9696a2" text-anchor="middle">C</text></svg>
<svg style="left:457.5px;top:760px" width="20" height="14" viewBox="0 0 20 14"><rect x="6" y="0" width="8.8" height="13.6" rx="1" fill="#41ad4a"/><text x="3" y="9.8" font-family="Liberation Mono, monospace" font-weight="bold" font-size="7.6" fill="#9696a2" text-anchor="middle">A</text><text x="10.4" y="9.8" font-family="Liberation Mono, monospace" font-weight="bold" font-size="7.6" fill="#dff5e0" text-anchor="middle">B</text><text x="17.8" y="9.8" font-family="Liberation Mono, monospace" font-weight="bold" font-size="7.6" fill="#9696a2" text-anchor="middle">C</text></svg>
<svg style="left:571.5px;top:760px" width="20" height="14" viewBox="0 0 20 14"><rect x="6" y="0" width="8.8" height="13.6" rx="1" fill="#41ad4a"/><text x="3" y="9.8" font-family="Liberation Mono, monospace" font-weight="bold" font-size="7.6" fill="#9696a2" text-anchor="middle">A</text><text x="10.4" y="9.8" font-family="Liberation Mono, monospace" font-weight="bold" font-size="7.6" fill="#dff5e0" text-anchor="middle">B</text><text x="17.8" y="9.8" font-family="Liberation Mono, monospace" font-weight="bold" font-size="7.6" fill="#9696a2" text-anchor="middle">C</text></svg>
<svg style="left:694.5px;top:760px" width="20" height="14" viewBox="0 0 20 14"><rect x="6" y="0" width="8.8" height="13.6" rx="1" fill="#41ad4a"/><text x="3" y="9.8" font-family="Liberation Mono, monospace" font-weight="bold" font-size="7.6" fill="#9696a2" text-anchor="middle">A</text><text x="10.4" y="9.8" font-family="Liberation Mono, monospace" font-weight="bold" font-size="7.6" fill="#dff5e0" text-anchor="middle">B</text><text x="17.8" y="9.8" font-family="Liberation Mono, monospace" font-weight="bold" font-size="7.6" fill="#9696a2" text-anchor="middle">C</text></svg>
<svg style="left:8.5px;top:762.3px" width="9.3" height="10.2" viewBox="0 0 10 10.5"><path d="M0.7 0.7 H9.3 V3.2 L6.4 5.6 V8 H3.6 V5.6 L0.7 3.2Z" fill="#fff" stroke="#000" stroke-width="1.3"/><rect x="1.5" y="2.4" width="7" height="1.1" fill="#000"/><rect x="2.4" y="8.6" width="5.2" height="1.7" fill="#000"/></svg>
<div style="left:4.5px;top:778px;width:776px;height:7px;background:linear-gradient(#efefef,#d4d4d4 45%,#a9a9a9 100%)"></div>
<div style="left:4.5px;top:785px;width:776.0px;height:21.42px;background:#bfcddb"></div>
<div style="left:4.5px;top:785px;width:15.5px;height:21.42px;background:#f0f0f0"></div>
<svg style="left:9.7px;top:790px" width="6.5" height="11.5" viewBox="0 0 7 12"><path d="M0 0 L7 6 L0 12Z" fill="#000"/></svg>
<svg style="left:61px;top:789px" width="14" height="14" viewBox="0 0 14 14"><rect x=".5" y=".5" width="13" height="13" fill="#fff" stroke="#a6a6a6"/><path d="M2.6 6.4 L5.9 9.4 L11.4 3.2 L11.4 6.4 L5.9 12.3 L2.6 9.4Z" fill="#000"/></svg>
<div style="left:19.5px;top:785px;width:1px;height:21.42px;background:#a0a0a0"></div>
<div style="left:113.5px;top:785px;width:1px;height:21.42px;background:#a0a0a0"></div>
<div style="left:207.5px;top:785px;width:1px;height:21.42px;background:#a0a0a0"></div>
<div style="left:451.0px;top:785px;width:1px;height:21.42px;background:#a0a0a0"></div>
<div style="left:565.0px;top:785px;width:1px;height:21.42px;background:#a0a0a0"></div>
<div style="left:688.0px;top:785px;width:1px;height:21.42px;background:#a0a0a0"></div>
<div style="left:780.0px;top:785px;width:1px;height:21.42px;background:#cfcfcf"></div>
<div class="t" style="letter-spacing:-0.35px;transform:scaleX(0.9784);transform-origin:0 0;top:786.15px;line-height:18px;left:118.2px;">CO0000018</div>
<div class="t" style="letter-spacing:-0.35px;transform:scaleX(0.9765);transform-origin:0 0;top:786.15px;line-height:18px;left:212.2px;">Samanthas Diner</div>
<div class="t" style="letter-spacing:-0.35px;transform:scaleX(0.9437);transform-origin:0 0;top:786.15px;line-height:18px;left:455.7px;">SAM001</div>
<div class="t" style="letter-spacing:-0.404px;top:786.15px;line-height:18px;left:569.7px;">Cost Per Copy</div>
<div style="left:4.5px;top:806.42px;width:776.0px;height:1px;background:#a0a0a0"></div>
<div style="left:4.5px;top:807.42px;width:776.0px;height:21.42px;background:#ebebeb"></div>
<div style="left:4.5px;top:807.42px;width:15.5px;height:21.42px;background:#f0f0f0"></div>
<div style="left:20px;top:807.42px;width:94px;height:21.42px;background:#fff"></div>
<svg style="left:61px;top:811.42px" width="14" height="14" viewBox="0 0 14 14"><rect x=".5" y=".5" width="13" height="13" fill="#fff" stroke="#a6a6a6"/><path d="M2.6 6.4 L5.9 9.4 L11.4 3.2 L11.4 6.4 L5.9 12.3 L2.6 9.4Z" fill="#000"/></svg>
<div style="left:19.5px;top:807.42px;width:1px;height:21.42px;background:#a0a0a0"></div>
<div style="left:113.5px;top:807.42px;width:1px;height:21.42px;background:#a0a0a0"></div>
<div style="left:207.5px;top:807.42px;width:1px;height:21.42px;background:#a0a0a0"></div>
<div style="left:451.0px;top:807.42px;width:1px;height:21.42px;background:#a0a0a0"></div>
<div style="left:565.0px;top:807.42px;width:1px;height:21.42px;background:#a0a0a0"></div>
<div style="left:688.0px;top:807.42px;width:1px;height:21.42px;background:#a0a0a0"></div>
<div style="left:780.0px;top:807.42px;width:1px;height:21.42px;background:#cfcfcf"></div>
<div class="t" style="letter-spacing:-0.35px;transform:scaleX(0.9784);transform-origin:0 0;top:808.57px;line-height:18px;left:118.2px;">CO0000077</div>
<div class="t" style="letter-spacing:-0.35px;transform:scaleX(0.9506);transform-origin:0 0;top:808.57px;line-height:18px;left:212.2px;">Pink Shoes</div>
<div class="t" style="letter-spacing:-0.412px;top:808.57px;line-height:18px;left:455.7px;">PIN0001</div>
<div class="t" style="letter-spacing:-0.404px;top:808.57px;line-height:18px;left:569.7px;">Cost Per Copy</div>
<div style="left:4.5px;top:828.8399999999999px;width:776.0px;height:1px;background:#a0a0a0"></div>
<div style="left:4.5px;top:829.8399999999999px;width:776.0px;height:21.42px;background:#ebebeb"></div>
<div style="left:4.5px;top:829.8399999999999px;width:15.5px;height:21.42px;background:#f0f0f0"></div>
<div style="left:20px;top:829.8399999999999px;width:94px;height:21.42px;background:#fff"></div>
<svg style="left:61px;top:833.8399999999999px" width="14" height="14" viewBox="0 0 14 14"><rect x=".5" y=".5" width="13" height="13" fill="#fff" stroke="#a6a6a6"/><path d="M2.6 6.4 L5.9 9.4 L11.4 3.2 L11.4 6.4 L5.9 12.3 L2.6 9.4Z" fill="#000"/></svg>
<div style="left:19.5px;top:829.8399999999999px;width:1px;height:21.42px;background:#a0a0a0"></div>
<div style="left:113.5px;top:829.8399999999999px;width:1px;height:21.42px;background:#a0a0a0"></div>
<div style="left:207.5px;top:829.8399999999999px;width:1px;height:21.42px;background:#a0a0a0"></div>
<div style="left:451.0px;top:829.8399999999999px;width:1px;height:21.42px;background:#a0a0a0"></div>
<div style="left:565.0px;top:829.8399999999999px;width:1px;height:21.42px;background:#a0a0a0"></div>
<div style="left:688.0px;top:829.8399999999999px;width:1px;height:21.42px;background:#a0a0a0"></div>
<div style="left:780.0px;top:829.8399999999999px;width:1px;height:21.42px;background:#cfcfcf"></div>
<div class="t" style="letter-spacing:-0.35px;transform:scaleX(0.9784);transform-origin:0 0;top:830.99px;line-height:18px;left:118.2px;">CO0000078</div>
<div class="t" style="letter-spacing:-0.35px;transform:scaleX(0.9506);transform-origin:0 0;top:830.99px;line-height:18px;left:212.2px;">Pink Shoes</div>
<div class="t" style="letter-spacing:-0.412px;top:830.99px;line-height:18px;left:455.7px;">PIN0001</div>
<div class="t" style="letter-spacing:-0.404px;top:830.99px;line-height:18px;left:569.7px;">Cost Per Copy</div>
<div style="left:4.5px;top:851.2599999999999px;width:776.0px;height:1px;background:#a0a0a0"></div>
<div style="left:4.5px;top:852.2599999999999px;width:776.0px;height:21.42px;background:#ebebeb"></div>
<div style="left:4.5px;top:852.2599999999999px;width:15.5px;height:21.42px;background:#f0f0f0"></div>
<div style="left:20px;top:852.2599999999999px;width:94px;height:21.42px;background:#fff"></div>
<svg style="left:61px;top:856.2599999999999px" width="14" height="14" viewBox="0 0 14 14"><rect x=".5" y=".5" width="13" height="13" fill="#fff" stroke="#a6a6a6"/><path d="M2.6 6.4 L5.9 9.4 L11.4 3.2 L11.4 6.4 L5.9 12.3 L2.6 9.4Z" fill="#000"/></svg>
<div style="left:19.5px;top:852.2599999999999px;width:1px;height:21.42px;background:#a0a0a0"></div>
<div style="left:113.5px;top:852.2599999999999px;width:1px;height:21.42px;background:#a0a0a0"></div>
<div style="left:207.5px;top:852.2599999999999px;width:1px;height:21.42px;background:#a0a0a0"></div>
<div style="left:451.0px;top:852.2599999999999px;width:1px;height:21.42px;background:#a0a0a0"></div>
<div style="left:565.0px;top:852.2599999999999px;width:1px;height:21.42px;background:#a0a0a0"></div>
<div style="left:688.0px;top:852.2599999999999px;width:1px;height:21.42px;background:#a0a0a0"></div>
<div style="left:780.0px;top:852.2599999999999px;width:1px;height:21.42px;background:#cfcfcf"></div>
<div class="t" style="letter-spacing:-0.35px;transform:scaleX(0.9784);transform-origin:0 0;top:853.41px;line-height:18px;left:118.2px;">CO0000079</div>
<div class="t" style="letter-spacing:-0.258px;top:853.41px;line-height:18px;left:212.2px;">Hope Works (Pty) Ltd</div>
<div class="t" style="letter-spacing:-0.35px;transform:scaleX(0.9437);transform-origin:0 0;top:853.41px;line-height:18px;left:455.7px;">HOP001</div>
<div class="t" style="letter-spacing:-0.404px;top:853.41px;line-height:18px;left:569.7px;">Cost Per Copy</div>
<div style="left:4.5px;top:873.6799999999998px;width:776.0px;height:1px;background:#a0a0a0"></div>
<div style="left:4.5px;top:938.5px;width:776px;height:31.5px;background:#f0f0f0;border-top:1px solid #dcdcdc;border-bottom:1px solid #a0a0a0;border-right:1px solid #dcdcdc"></div>
<div style="left:4.5px;top:970px;width:776px;height:20.5px;background:#e8e8e8"></div>
<div style="left:674px;top:970px;width:85.5px;height:20.5px;background:#f8f8f8"></div>
<div style="left:4.5px;top:970px;width:21px;height:20.5px;background:#f0f0f0;border-right:1px solid #a8a8a8;border-bottom:1px solid #a8a8a8"></div>
<div style="left:25.5px;top:970px;width:648.5px;height:20.5px;background:#f0f0f0;border-right:1px solid #a0a0a0;border-bottom:1px solid #a0a0a0;border-top:1px solid #fafafa"></div>
<div style="left:759.5px;top:970.5px;width:20.5px;height:20.0px;background:#f0f0f0;border-right:1px solid #a8a8a8;border-bottom:1px solid #a8a8a8"></div>
<svg style="left:12px;top:975.55px" width="6" height="9.5" viewBox="0 0 6 10"><path d="M6 0 L0 5 L6 10Z" fill="#000"/></svg>
<svg style="left:767px;top:975.55px" width="6" height="9.5" viewBox="0 0 6 10"><path d="M0 0 L6 5 L0 10Z" fill="#000"/></svg>
<div style="left:791px;top:179px;width:1129px;height:817px;border:2px solid #adadb9;border-right-width:1.5px;border-bottom-width:2px;border-bottom-color:#a4a4b0;border-top-width:1.5px;background:#fff"></div>
<div style="left:792px;top:180px;width:1px;height:814px;background:#c6c6d0"></div>
<div style="left:792.5px;top:180px;width:1126px;height:40.5px;background:#ebecf0"></div>
<svg style="left:1680px;top:180.5px" width="238.5" height="39.5" viewBox="0 0 238.5 40" preserveAspectRatio="none"><defs><linearGradient id="swp" x1="0" y1="0" x2="1" y2="0"><stop offset="0" stop-color="#ead9f0" stop-opacity="0"/><stop offset=".35" stop-color="#e9d8ef" stop-opacity=".4"/><stop offset="1" stop-color="#e6d4ee" stop-opacity=".6"/></linearGradient><linearGradient id="swb" x1="0" y1="0" x2="1" y2="1"><stop offset="0" stop-color="#d3c8ed"/><stop offset=".3" stop-color="#cec1eb"/><stop offset="1" stop-color="#e0d9f1"/></linearGradient></defs><path d="M0 0 H127.5 Q98 18 74 40 H0Z" fill="url(#swp)"/><path d="M152.5 0 Q110 13 87 40 H175 Q200 19 228 0Z" fill="url(#swb)"/><path d="M228 0 Q200 19 175 40 H238.5 V0Z" fill="#e3dbf1"/><path d="M228 0 Q200 19 175 40" fill="none" stroke="#d2c3ec" stroke-width="1.2"/><path d="M238.5 6 Q228 20 222 40 H238.5Z" fill="#ece8f5"/></svg>
<div class="t" style="letter-spacing:-0.217px;top:191.95px;line-height:18px;color:#c3c4d0;left:798.0px;">Drag a column header here to group by that column</div>
<div style="left:792.5px;top:220px;width:1126px;height:25.5px;background:linear-gradient(#fafafb,#ededf0)"></div>
<div style="left:792.5px;top:220px;width:1126px;height:1px;background:#cfcfd8"></div>
<div style="left:792.5px;top:245.5px;width:1126px;height:1px;background:#cfcfd8"></div>
<div style="left:811.0px;top:220px;width:1px;height:25.5px;background:#cfcfd8"></div>
<div style="left:880.0px;top:220px;width:1px;height:25.5px;background:#cfcfd8"></div>
<div style="left:1033.5px;top:220px;width:1px;height:25.5px;background:#cfcfd8"></div>
<div class="t" style="letter-spacing:-0.35px;transform:scaleX(0.9625);transform-origin:0 0;top:223.65px;line-height:18px;color:#2c2c3c;left:885.9px;">ExclFromEscalation</div>
<div style="left:1140.0px;top:220px;width:1px;height:25.5px;background:#cfcfd8"></div>
<div class="t" style="letter-spacing:-0.489px;top:223.65px;line-height:18px;color:#2c2c3c;left:1039.4px;">FeeTypeDesc</div>
<div style="left:1195.0px;top:220px;width:1px;height:25.5px;background:#cfcfd8"></div>
<div class="t" style="letter-spacing:-0.390px;top:223.65px;line-height:18px;color:#2c2c3c;left:1145.9px;">Type</div>
<div style="left:1288.8px;top:220px;width:1px;height:25.5px;background:#cfcfd8"></div>
<div class="t" style="letter-spacing:-0.251px;top:223.65px;line-height:18px;color:#2c2c3c;left:1200.9px;">ContractNo</div>
<div style="left:1433.0px;top:220px;width:1px;height:25.5px;background:#cfcfd8"></div>
<div class="t" style="letter-spacing:-0.35px;transform:scaleX(0.9645);transform-origin:0 0;top:223.65px;line-height:18px;color:#2c2c3c;left:1294.7px;">CustomerName</div>
<div style="left:1506.5px;top:220px;width:1px;height:25.5px;background:#cfcfd8"></div>
<div class="t" style="letter-spacing:-0.375px;top:223.65px;line-height:18px;color:#2c2c3c;left:1438.9px;">Amount</div>
<div style="left:1584.0px;top:220px;width:1px;height:25.5px;background:#cfcfd8"></div>
<div class="t" style="letter-spacing:-0.213px;top:223.65px;line-height:18px;color:#2c2c3c;left:1512.4px;">Increase</div>
<div style="left:1681.5px;top:220px;width:1px;height:25.5px;background:#cfcfd8"></div>
<div class="t" style="letter-spacing:-0.418px;top:223.65px;line-height:18px;color:#2c2c3c;left:1589.9px;">NewAmount</div>
<div style="left:1817.5px;top:220px;width:1px;height:25.5px;background:#cfcfd8"></div>
<div class="t" style="letter-spacing:-0.279px;top:223.65px;line-height:18px;color:#2c2c3c;left:1687.4px;">ContractTypeDesc</div>
<div style="left:1918.0px;top:220px;width:1px;height:25.5px;background:#cfcfd8"></div>
<div class="t" style="letter-spacing:-0.496px;top:223.65px;line-height:18px;color:#2c2c3c;left:1823.4px;">CustomerCode</div>
<svg style="left:839px;top:225px" width="16" height="16" viewBox="0 0 16 16"><rect x=".7" y=".7" width="14.6" height="14.6" rx=".4" fill="#dfdfe7" stroke="#9494a2" stroke-width="1.4"/><rect x="2.6" y="2.6" width="10.8" height="10.8" fill="none" stroke="#ececf2" stroke-width="1"/><rect x="3.9" y="3.9" width="8.2" height="8.2" fill="#fff"/><rect x="2.8" y="2.8" width="10.4" height="10.4" fill="#5f84dc" stroke="#4468c8" stroke-width=".9"/><rect x="4" y="4" width="7" height="6" fill="#86a6ee" opacity=".75"/></svg>
<div style="left:792.5px;top:246px;width:1126px;height:25.3px;background:#e0ffff"></div>
<div style="left:792.5px;top:246px;width:19px;height:25.3px;background:#f2f2f5"></div>
<div style="left:811.0px;top:246px;width:1px;height:25.3px;background:#cfd9e2"></div>
<div style="left:880.0px;top:246px;width:1px;height:25.3px;background:#cfd9e2"></div>
<div style="left:1033.5px;top:246px;width:1px;height:25.3px;background:#cfd9e2"></div>
<div style="left:1140.0px;top:246px;width:1px;height:25.3px;background:#cfd9e2"></div>
<div style="left:1195.0px;top:246px;width:1px;height:25.3px;background:#cfd9e2"></div>
<div style="left:1288.8px;top:246px;width:1px;height:25.3px;background:#cfd9e2"></div>
<div style="left:1433.0px;top:246px;width:1px;height:25.3px;background:#cfd9e2"></div>
<div style="left:1506.5px;top:246px;width:1px;height:25.3px;background:#cfd9e2"></div>
<div style="left:1584.0px;top:246px;width:1px;height:25.3px;background:#cfd9e2"></div>
<div style="left:1681.5px;top:246px;width:1px;height:25.3px;background:#cfd9e2"></div>
<div style="left:1817.5px;top:246px;width:1px;height:25.3px;background:#cfd9e2"></div>
<div style="left:1918.0px;top:246px;width:1px;height:25.3px;background:#cfd9e2"></div>
<div style="left:792.5px;top:245px;width:1126px;height:1px;background:#cdcdd6"></div>
<svg style="left:839px;top:250.5px" width="16" height="16" viewBox="0 0 16 16"><rect x=".7" y=".7" width="14.6" height="14.6" rx=".4" fill="#dfdfe7" stroke="#9494a2" stroke-width="1.4"/><rect x="2.6" y="2.6" width="10.8" height="10.8" fill="none" stroke="#ececf2" stroke-width="1"/><rect x="3.9" y="3.9" width="8.2" height="8.2" fill="#fff"/><rect x="2.8" y="2.8" width="10.4" height="10.4" fill="#5f84dc" stroke="#4468c8" stroke-width=".9"/><rect x="4" y="4" width="7" height="6" fill="#86a6ee" opacity=".75"/></svg>
<svg style="left:887.0px;top:252.2px" width="20" height="14" viewBox="0 0 20 14"><rect x="6" y="0" width="8.8" height="13.6" rx="1" fill="#41ad4a"/><text x="3" y="9.8" font-family="Liberation Mono, monospace" font-weight="bold" font-size="7.6" fill="#9696a2" text-anchor="middle">A</text><text x="10.4" y="9.8" font-family="Liberation Mono, monospace" font-weight="bold" font-size="7.6" fill="#dff5e0" text-anchor="middle">B</text><text x="17.8" y="9.8" font-family="Liberation Mono, monospace" font-weight="bold" font-size="7.6" fill="#9696a2" text-anchor="middle">C</text></svg>
<svg style="left:1040.5px;top:252.2px" width="20" height="14" viewBox="0 0 20 14"><rect x="6" y="0" width="8.8" height="13.6" rx="1" fill="#41ad4a"/><text x="3" y="9.8" font-family="Liberation Mono, monospace" font-weight="bold" font-size="7.6" fill="#9696a2" text-anchor="middle">A</text><text x="10.4" y="9.8" font-family="Liberation Mono, monospace" font-weight="bold" font-size="7.6" fill="#dff5e0" text-anchor="middle">B</text><text x="17.8" y="9.8" font-family="Liberation Mono, monospace" font-weight="bold" font-size="7.6" fill="#9696a2" text-anchor="middle">C</text></svg>
<svg style="left:1147.0px;top:252.2px" width="20" height="14" viewBox="0 0 20 14"><rect x="6" y="0" width="8.8" height="13.6" rx="1" fill="#41ad4a"/><text x="3" y="9.8" font-family="Liberation Mono, monospace" font-weight="bold" font-size="7.6" fill="#9696a2" text-anchor="middle">A</text><text x="10.4" y="9.8" font-family="Liberation Mono, monospace" font-weight="bold" font-size="7.6" fill="#dff5e0" text-anchor="middle">B</text><text x="17.8" y="9.8" font-family="Liberation Mono, monospace" font-weight="bold" font-size="7.6" fill="#9696a2" text-anchor="middle">C</text></svg>
<svg style="left:1202.0px;top:252.2px" width="20" height="14" viewBox="0 0 20 14"><rect x="6" y="0" width="8.8" height="13.6" rx="1" fill="#41ad4a"/><text x="3" y="9.8" font-family="Liberation Mono, monospace" font-weight="bold" font-size="7.6" fill="#9696a2" text-anchor="middle">A</text><text x="10.4" y="9.8" font-family="Liberation Mono, monospace" font-weight="bold" font-size="7.6" fill="#dff5e0" text-anchor="middle">B</text><text x="17.8" y="9.8" font-family="Liberation Mono, monospace" font-weight="bold" font-size="7.6" fill="#9696a2" text-anchor="middle">C</text></svg>
<svg style="left:1295.8px;top:252.2px" width="20" height="14" viewBox="0 0 20 14"><rect x="6" y="0" width="8.8" height="13.6" rx="1" fill="#41ad4a"/><text x="3" y="9.8" font-family="Liberation Mono, monospace" font-weight="bold" font-size="7.6" fill="#9696a2" text-anchor="middle">A</text><text x="10.4" y="9.8" font-family="Liberation Mono, monospace" font-weight="bold" font-size="7.6" fill="#dff5e0" text-anchor="middle">B</text><text x="17.8" y="9.8" font-family="Liberation Mono, monospace" font-weight="bold" font-size="7.6" fill="#9696a2" text-anchor="middle">C</text></svg>
<div style="left:1443.0px;top:255.6px;width:11.5px;height:1.2px;background:#9a9aa4"></div>
<div style="left:1443.0px;top:259.3px;width:11.5px;height:1.2px;background:#9a9aa4"></div>
<div style="left:1516.5px;top:255.6px;width:11.5px;height:1.2px;background:#9a9aa4"></div>
<div style="left:1516.5px;top:259.3px;width:11.5px;height:1.2px;background:#9a9aa4"></div>
<div style="left:1594.0px;top:255.6px;width:11.5px;height:1.2px;background:#9a9aa4"></div>
<div style="left:1594.0px;top:259.3px;width:11.5px;height:1.2px;background:#9a9aa4"></div>
<svg style="left:1688.5px;top:252.2px" width="20" height="14" viewBox="0 0 20 14"><rect x="6" y="0" width="8.8" height="13.6" rx="1" fill="#41ad4a"/><text x="3" y="9.8" font-family="Liberation Mono, monospace" font-weight="bold" font-size="7.6" fill="#9696a2" text-anchor="middle">A</text><text x="10.4" y="9.8" font-family="Liberation Mono, monospace" font-weight="bold" font-size="7.6" fill="#dff5e0" text-anchor="middle">B</text><text x="17.8" y="9.8" font-family="Liberation Mono, monospace" font-weight="bold" font-size="7.6" fill="#9696a2" text-anchor="middle">C</text></svg>
<svg style="left:1824.5px;top:252.2px" width="20" height="14" viewBox="0 0 20 14"><rect x="6" y="0" width="8.8" height="13.6" rx="1" fill="#41ad4a"/><text x="3" y="9.8" font-family="Liberation Mono, monospace" font-weight="bold" font-size="7.6" fill="#9696a2" text-anchor="middle">A</text><text x="10.4" y="9.8" font-family="Liberation Mono, monospace" font-weight="bold" font-size="7.6" fill="#dff5e0" text-anchor="middle">B</text><text x="17.8" y="9.8" font-family="Liberation Mono, monospace" font-weight="bold" font-size="7.6" fill="#9696a2" text-anchor="middle">C</text></svg>
<svg style="left:798px;top:254.5px" width="8" height="10" viewBox="0 0 8 10"><ellipse cx="4" cy="3" rx="3.7" ry="3" fill="#1c1c26"/><ellipse cx="3.2" cy="2.2" rx="1.5" ry="1" fill="#e8e8ee"/><path d="M1.4 5 L4 7.4 L6.6 5Z" fill="#1c1c26"/><rect x="3.3" y="5.5" width="1.5" height="4.3" fill="#1c1c26"/></svg>
<div style="left:792.5px;top:271px;width:1126px;height:3px;background:linear-gradient(#cdcdd6,#d6d6de)"></div>
<div style="left:792.5px;top:274px;width:1126px;height:1px;background:#f4f4f7"></div>
<div style="left:792.5px;top:275px;width:1126px;height:1px;background:#d0d0d9"></div>
<div style="left:792.5px;top:276px;width:1126px;height:27px;background:#f0f0f2"></div>
<div style="left:792.5px;top:276px;width:19px;height:27px;background:#f2f2f5"></div>
<div style="left:1507px;top:276px;width:77.5px;height:27px;background:#fff"></div>
<div style="left:792.5px;top:302px;width:1126px;height:1px;background:#d6d6de"></div>
<svg style="left:839px;top:280px" width="16" height="16" viewBox="0 0 16 16"><rect x=".7" y=".7" width="14.6" height="14.6" rx=".4" fill="#dfdfe7" stroke="#9494a2" stroke-width="1.4"/><rect x="2.6" y="2.6" width="10.8" height="10.8" fill="none" stroke="#ececf2" stroke-width="1"/><rect x="3.9" y="3.9" width="8.2" height="8.2" fill="#fff"/></svg>
<div class="t" style="letter-spacing:-0.35px;transform:scaleX(0.9299);transform-origin:0 0;top:279.60px;line-height:18px;color:#2c2c3c;left:885.8px;">No</div>
<div class="t" style="letter-spacing:-0.242px;top:279.60px;line-height:18px;color:#2c2c3c;left:1039.5px;">Aggregate Mo...</div>
<div class="t" style="letter-spacing:-0.35px;transform:scaleX(0.9037);transform-origin:0 0;top:279.60px;line-height:18px;color:#2c2c3c;left:1145.8px;">AMCH</div>
<div class="t" style="letter-spacing:-0.35px;transform:scaleX(0.9784);transform-origin:0 0;top:279.60px;line-height:18px;color:#2c2c3c;left:1200.7px;">CO0000079</div>
<div class="t" style="letter-spacing:-0.258px;top:279.60px;line-height:18px;color:#2c2c3c;left:1294.5px;">Hope Works (Pty) Ltd</div>
<div class="t" style="top:279.60px;line-height:18px;color:#2c2c3c;right:418.4px;">78.750</div>
<div class="t" style="top:279.60px;line-height:18px;color:#2c2c3c;right:340.7px;">3.938</div>
<div class="t" style="top:279.60px;line-height:18px;color:#2c2c3c;right:243.2px;">82.688</div>
<div class="t" style="letter-spacing:-0.419px;top:279.60px;line-height:18px;color:#2c2c3c;left:1687.0px;">Cost Per Copy</div>
<div class="t" style="letter-spacing:-0.35px;transform:scaleX(0.9437);transform-origin:0 0;top:279.60px;line-height:18px;color:#2c2c3c;left:1823.0px;">HOP001</div>
<div style="left:792.5px;top:303px;width:1126px;height:26px;background:#ececee"></div>
<div style="left:792.5px;top:303px;width:19px;height:26px;background:#f2f2f5"></div>
<div style="left:811.5px;top:303px;width:69px;height:26px;background:#fff"></div>
<div style="left:1507px;top:303px;width:77.5px;height:26px;background:#fff"></div>
<div style="left:792.5px;top:328px;width:1126px;height:1px;background:#d6d6de"></div>
<svg style="left:839px;top:306px" width="16" height="16" viewBox="0 0 16 16"><rect x=".7" y=".7" width="14.6" height="14.6" rx=".4" fill="#dfdfe7" stroke="#9494a2" stroke-width="1.4"/><rect x="2.6" y="2.6" width="10.8" height="10.8" fill="none" stroke="#ececf2" stroke-width="1"/><rect x="3.9" y="3.9" width="8.2" height="8.2" fill="#fff"/></svg>
<div class="t" style="letter-spacing:-0.35px;transform:scaleX(0.9299);transform-origin:0 0;top:305.82px;line-height:18px;color:#2c2c3c;left:885.8px;">No</div>
<div class="t" style="letter-spacing:-0.242px;top:305.82px;line-height:18px;color:#2c2c3c;left:1039.5px;">Aggregate Mo...</div>
<div class="t" style="letter-spacing:-0.35px;transform:scaleX(0.9037);transform-origin:0 0;top:305.82px;line-height:18px;color:#2c2c3c;left:1145.8px;">AMCH</div>
<div class="t" style="letter-spacing:-0.35px;transform:scaleX(0.9784);transform-origin:0 0;top:305.82px;line-height:18px;color:#2c2c3c;left:1200.7px;">CO0000077</div>
<div class="t" style="letter-spacing:-0.35px;transform:scaleX(0.9506);transform-origin:0 0;top:305.82px;line-height:18px;color:#2c2c3c;left:1294.5px;">Pink Shoes</div>
<div class="t" style="top:305.82px;line-height:18px;color:#2c2c3c;right:418.4px;">82.688</div>
<div class="t" style="top:305.82px;line-height:18px;color:#2c2c3c;right:340.7px;">4.134</div>
<div class="t" style="top:305.82px;line-height:18px;color:#2c2c3c;right:243.2px;">86.822</div>
<div class="t" style="letter-spacing:-0.419px;top:305.82px;line-height:18px;color:#2c2c3c;left:1687.0px;">Cost Per Copy</div>
<div class="t" style="letter-spacing:-0.412px;top:305.82px;line-height:18px;color:#2c2c3c;left:1823.0px;">PIN0001</div>
<div style="left:792.5px;top:329px;width:1126px;height:26px;background:#ececee"></div>
<div style="left:792.5px;top:329px;width:19px;height:26px;background:#f2f2f5"></div>
<div style="left:811.5px;top:329px;width:69px;height:26px;background:#fff"></div>
<div style="left:1507px;top:329px;width:77.5px;height:26px;background:#fff"></div>
<div style="left:792.5px;top:354px;width:1126px;height:1px;background:#d6d6de"></div>
<svg style="left:839px;top:333px" width="16" height="16" viewBox="0 0 16 16"><rect x=".7" y=".7" width="14.6" height="14.6" rx=".4" fill="#dfdfe7" stroke="#9494a2" stroke-width="1.4"/><rect x="2.6" y="2.6" width="10.8" height="10.8" fill="none" stroke="#ececf2" stroke-width="1"/><rect x="3.9" y="3.9" width="8.2" height="8.2" fill="#fff"/></svg>
<div class="t" style="letter-spacing:-0.35px;transform:scaleX(0.9299);transform-origin:0 0;top:332.04px;line-height:18px;color:#2c2c3c;left:885.8px;">No</div>
<div class="t" style="letter-spacing:-0.242px;top:332.04px;line-height:18px;color:#2c2c3c;left:1039.5px;">Aggregate Me...</div>
<div class="t" style="letter-spacing:-0.35px;transform:scaleX(0.9145);transform-origin:0 0;top:332.04px;line-height:18px;color:#2c2c3c;left:1145.8px;">AMTR</div>
<div class="t" style="letter-spacing:-0.35px;transform:scaleX(0.9784);transform-origin:0 0;top:332.04px;line-height:18px;color:#2c2c3c;left:1200.7px;">CO0000079</div>
<div class="t" style="letter-spacing:-0.258px;top:332.04px;line-height:18px;color:#2c2c3c;left:1294.5px;">Hope Works (Pty) Ltd</div>
<div class="t" style="top:332.04px;line-height:18px;color:#2c2c3c;right:418.4px;">0.000</div>
<div class="t" style="top:332.04px;line-height:18px;color:#2c2c3c;right:340.7px;">0.000</div>
<div class="t" style="top:332.04px;line-height:18px;color:#2c2c3c;right:243.2px;">0.000</div>
<div class="t" style="letter-spacing:-0.419px;top:332.04px;line-height:18px;color:#2c2c3c;left:1687.0px;">Cost Per Copy</div>
<div class="t" style="letter-spacing:-0.35px;transform:scaleX(0.9437);transform-origin:0 0;top:332.04px;line-height:18px;color:#2c2c3c;left:1823.0px;">HOP001</div>
<div style="left:792.5px;top:355px;width:1126px;height:27px;background:#ececee"></div>
<div style="left:792.5px;top:355px;width:19px;height:27px;background:#f2f2f5"></div>
<div style="left:811.5px;top:355px;width:69px;height:27px;background:#fff"></div>
<div style="left:1507px;top:355px;width:77.5px;height:27px;background:#fff"></div>
<div style="left:792.5px;top:381px;width:1126px;height:1px;background:#d6d6de"></div>
<svg style="left:839px;top:359px" width="16" height="16" viewBox="0 0 16 16"><rect x=".7" y=".7" width="14.6" height="14.6" rx=".4" fill="#dfdfe7" stroke="#9494a2" stroke-width="1.4"/><rect x="2.6" y="2.6" width="10.8" height="10.8" fill="none" stroke="#ececf2" stroke-width="1"/><rect x="3.9" y="3.9" width="8.2" height="8.2" fill="#fff"/></svg>
<div class="t" style="letter-spacing:-0.35px;transform:scaleX(0.9299);transform-origin:0 0;top:358.26px;line-height:18px;color:#2c2c3c;left:885.8px;">No</div>
<div class="t" style="letter-spacing:-0.242px;top:358.26px;line-height:18px;color:#2c2c3c;left:1039.5px;">Aggregate Me...</div>
<div class="t" style="letter-spacing:-0.35px;transform:scaleX(0.9145);transform-origin:0 0;top:358.26px;line-height:18px;color:#2c2c3c;left:1145.8px;">AMTR</div>
<div class="t" style="letter-spacing:-0.35px;transform:scaleX(0.9784);transform-origin:0 0;top:358.26px;line-height:18px;color:#2c2c3c;left:1200.7px;">CO0000077</div>
<div class="t" style="letter-spacing:-0.35px;transform:scaleX(0.9506);transform-origin:0 0;top:358.26px;line-height:18px;color:#2c2c3c;left:1294.5px;">Pink Shoes</div>
<div class="t" style="top:358.26px;line-height:18px;color:#2c2c3c;right:418.4px;">0.000</div>
<div class="t" style="top:358.26px;line-height:18px;color:#2c2c3c;right:340.7px;">0.000</div>
<div class="t" style="top:358.26px;line-height:18px;color:#2c2c3c;right:243.2px;">0.000</div>
<div class="t" style="letter-spacing:-0.419px;top:358.26px;line-height:18px;color:#2c2c3c;left:1687.0px;">Cost Per Copy</div>
<div class="t" style="letter-spacing:-0.412px;top:358.26px;line-height:18px;color:#2c2c3c;left:1823.0px;">PIN0001</div>
<div style="left:792.5px;top:382px;width:1126px;height:26px;background:#ececee"></div>
<div style="left:792.5px;top:382px;width:19px;height:26px;background:#f2f2f5"></div>
<div style="left:811.5px;top:382px;width:69px;height:26px;background:#fff"></div>
<div style="left:1507px;top:382px;width:77.5px;height:26px;background:#fff"></div>
<div style="left:792.5px;top:407px;width:1126px;height:1px;background:#d6d6de"></div>
<svg style="left:839px;top:385px" width="16" height="16" viewBox="0 0 16 16"><rect x=".7" y=".7" width="14.6" height="14.6" rx=".4" fill="#dfdfe7" stroke="#9494a2" stroke-width="1.4"/><rect x="2.6" y="2.6" width="10.8" height="10.8" fill="none" stroke="#ececf2" stroke-width="1"/><rect x="3.9" y="3.9" width="8.2" height="8.2" fill="#fff"/></svg>
<div class="t" style="letter-spacing:-0.35px;transform:scaleX(0.9299);transform-origin:0 0;top:384.48px;line-height:18px;color:#2c2c3c;left:885.8px;">No</div>
<div class="t" style="letter-spacing:-0.470px;top:384.48px;line-height:18px;color:#2c2c3c;left:1039.5px;">Meter Min Billing</div>
<div class="t" style="letter-spacing:-0.35px;transform:scaleX(0.9446);transform-origin:0 0;top:384.48px;line-height:18px;color:#2c2c3c;left:1145.8px;">IMTR</div>
<div class="t" style="letter-spacing:-0.35px;transform:scaleX(0.9784);transform-origin:0 0;top:384.48px;line-height:18px;color:#2c2c3c;left:1200.7px;">CO0000018</div>
<div class="t" style="letter-spacing:-0.35px;transform:scaleX(0.9765);transform-origin:0 0;top:384.48px;line-height:18px;color:#2c2c3c;left:1294.5px;">Samanthas Diner</div>
<div class="t" style="top:384.48px;line-height:18px;color:#2c2c3c;right:418.4px;">0.000</div>
<div class="t" style="top:384.48px;line-height:18px;color:#2c2c3c;right:340.7px;">0.000</div>
<div class="t" style="top:384.48px;line-height:18px;color:#2c2c3c;right:243.2px;">0.000</div>
<div class="t" style="letter-spacing:-0.419px;top:384.48px;line-height:18px;color:#2c2c3c;left:1687.0px;">Cost Per Copy</div>
<div class="t" style="letter-spacing:-0.35px;transform:scaleX(0.9437);transform-origin:0 0;top:384.48px;line-height:18px;color:#2c2c3c;left:1823.0px;">SAM001</div>
<div style="left:792.5px;top:408px;width:1126px;height:26px;background:#ececee"></div>
<div style="left:792.5px;top:408px;width:19px;height:26px;background:#f2f2f5"></div>
<div style="left:811.5px;top:408px;width:69px;height:26px;background:#fff"></div>
<div style="left:1507px;top:408px;width:77.5px;height:26px;background:#fff"></div>
<div style="left:792.5px;top:433px;width:1126px;height:1px;background:#d6d6de"></div>
<svg style="left:839px;top:411px" width="16" height="16" viewBox="0 0 16 16"><rect x=".7" y=".7" width="14.6" height="14.6" rx=".4" fill="#dfdfe7" stroke="#9494a2" stroke-width="1.4"/><rect x="2.6" y="2.6" width="10.8" height="10.8" fill="none" stroke="#ececf2" stroke-width="1"/><rect x="3.9" y="3.9" width="8.2" height="8.2" fill="#fff"/></svg>
<div class="t" style="letter-spacing:-0.35px;transform:scaleX(0.9299);transform-origin:0 0;top:410.70px;line-height:18px;color:#2c2c3c;left:885.8px;">No</div>
<div class="t" style="letter-spacing:-0.470px;top:410.70px;line-height:18px;color:#2c2c3c;left:1039.5px;">Meter Min Billing</div>
<div class="t" style="letter-spacing:-0.35px;transform:scaleX(0.9446);transform-origin:0 0;top:410.70px;line-height:18px;color:#2c2c3c;left:1145.8px;">IMTR</div>
<div class="t" style="letter-spacing:-0.35px;transform:scaleX(0.9784);transform-origin:0 0;top:410.70px;line-height:18px;color:#2c2c3c;left:1200.7px;">CO0000018</div>
<div class="t" style="letter-spacing:-0.35px;transform:scaleX(0.9765);transform-origin:0 0;top:410.70px;line-height:18px;color:#2c2c3c;left:1294.5px;">Samanthas Diner</div>
<div class="t" style="top:410.70px;line-height:18px;color:#2c2c3c;right:418.4px;">0.000</div>
<div class="t" style="top:410.70px;line-height:18px;color:#2c2c3c;right:340.7px;">0.000</div>
<div class="t" style="top:410.70px;line-height:18px;color:#2c2c3c;right:243.2px;">0.000</div>
<div class="t" style="letter-spacing:-0.419px;top:410.70px;line-height:18px;color:#2c2c3c;left:1687.0px;">Cost Per Copy</div>
<div class="t" style="letter-spacing:-0.35px;transform:scaleX(0.9437);transform-origin:0 0;top:410.70px;line-height:18px;color:#2c2c3c;left:1823.0px;">SAM001</div>
<div style="left:792.5px;top:434px;width:1126px;height:26px;background:#ececee"></div>
<div style="left:792.5px;top:434px;width:19px;height:26px;background:#f2f2f5"></div>
<div style="left:811.5px;top:434px;width:69px;height:26px;background:#fff"></div>
<div style="left:1507px;top:434px;width:77.5px;height:26px;background:#fff"></div>
<div style="left:792.5px;top:459px;width:1126px;height:1px;background:#d6d6de"></div>
<svg style="left:839px;top:437px" width="16" height="16" viewBox="0 0 16 16"><rect x=".7" y=".7" width="14.6" height="14.6" rx=".4" fill="#dfdfe7" stroke="#9494a2" stroke-width="1.4"/><rect x="2.6" y="2.6" width="10.8" height="10.8" fill="none" stroke="#ececf2" stroke-width="1"/><rect x="3.9" y="3.9" width="8.2" height="8.2" fill="#fff"/></svg>
<div class="t" style="letter-spacing:-0.35px;transform:scaleX(0.9299);transform-origin:0 0;top:436.92px;line-height:18px;color:#2c2c3c;left:885.8px;">No</div>
<div class="t" style="letter-spacing:-0.470px;top:436.92px;line-height:18px;color:#2c2c3c;left:1039.5px;">Meter Min Billing</div>
<div class="t" style="letter-spacing:-0.35px;transform:scaleX(0.9446);transform-origin:0 0;top:436.92px;line-height:18px;color:#2c2c3c;left:1145.8px;">IMTR</div>
<div class="t" style="letter-spacing:-0.35px;transform:scaleX(0.9784);transform-origin:0 0;top:436.92px;line-height:18px;color:#2c2c3c;left:1200.7px;">CO0000018</div>
<div class="t" style="letter-spacing:-0.35px;transform:scaleX(0.9765);transform-origin:0 0;top:436.92px;line-height:18px;color:#2c2c3c;left:1294.5px;">Samanthas Diner</div>
<div class="t" style="top:436.92px;line-height:18px;color:#2c2c3c;right:418.4px;">0.000</div>
<div class="t" style="top:436.92px;line-height:18px;color:#2c2c3c;right:340.7px;">0.000</div>
<div class="t" style="top:436.92px;line-height:18px;color:#2c2c3c;right:243.2px;">0.000</div>
<div class="t" style="letter-spacing:-0.419px;top:436.92px;line-height:18px;color:#2c2c3c;left:1687.0px;">Cost Per Copy</div>
<div class="t" style="letter-spacing:-0.35px;transform:scaleX(0.9437);transform-origin:0 0;top:436.92px;line-height:18px;color:#2c2c3c;left:1823.0px;">SAM001</div>
<div style="left:792.5px;top:460px;width:1126px;height:27px;background:#ececee"></div>
<div style="left:792.5px;top:460px;width:19px;height:27px;background:#f2f2f5"></div>
<div style="left:811.5px;top:460px;width:69px;height:27px;background:#fff"></div>
<div style="left:1507px;top:460px;width:77.5px;height:27px;background:#fff"></div>
<div style="left:792.5px;top:486px;width:1126px;height:1px;background:#d6d6de"></div>
<svg style="left:839px;top:464px" width="16" height="16" viewBox="0 0 16 16"><rect x=".7" y=".7" width="14.6" height="14.6" rx=".4" fill="#dfdfe7" stroke="#9494a2" stroke-width="1.4"/><rect x="2.6" y="2.6" width="10.8" height="10.8" fill="none" stroke="#ececf2" stroke-width="1"/><rect x="3.9" y="3.9" width="8.2" height="8.2" fill="#fff"/></svg>
<div class="t" style="letter-spacing:-0.35px;transform:scaleX(0.9299);transform-origin:0 0;top:463.14px;line-height:18px;color:#2c2c3c;left:885.8px;">No</div>
<div class="t" style="letter-spacing:-0.470px;top:463.14px;line-height:18px;color:#2c2c3c;left:1039.5px;">Meter Min Billing</div>
<div class="t" style="letter-spacing:-0.35px;transform:scaleX(0.9446);transform-origin:0 0;top:463.14px;line-height:18px;color:#2c2c3c;left:1145.8px;">IMTR</div>
<div class="t" style="letter-spacing:-0.35px;transform:scaleX(0.9784);transform-origin:0 0;top:463.14px;line-height:18px;color:#2c2c3c;left:1200.7px;">CO0000077</div>
<div class="t" style="letter-spacing:-0.35px;transform:scaleX(0.9506);transform-origin:0 0;top:463.14px;line-height:18px;color:#2c2c3c;left:1294.5px;">Pink Shoes</div>
<div class="t" style="top:463.14px;line-height:18px;color:#2c2c3c;right:418.4px;">0.000</div>
<div class="t" style="top:463.14px;line-height:18px;color:#2c2c3c;right:340.7px;">0.000</div>
<div class="t" style="top:463.14px;line-height:18px;color:#2c2c3c;right:243.2px;">0.000</div>
<div class="t" style="letter-spacing:-0.419px;top:463.14px;line-height:18px;color:#2c2c3c;left:1687.0px;">Cost Per Copy</div>
<div class="t" style="letter-spacing:-0.412px;top:463.14px;line-height:18px;color:#2c2c3c;left:1823.0px;">PIN0001</div>
<div style="left:792.5px;top:487px;width:1126px;height:26px;background:#ececee"></div>
<div style="left:792.5px;top:487px;width:19px;height:26px;background:#f2f2f5"></div>
<div style="left:811.5px;top:487px;width:69px;height:26px;background:#fff"></div>
<div style="left:1507px;top:487px;width:77.5px;height:26px;background:#fff"></div>
<div style="left:792.5px;top:512px;width:1126px;height:1px;background:#d6d6de"></div>
<svg style="left:839px;top:490px" width="16" height="16" viewBox="0 0 16 16"><rect x=".7" y=".7" width="14.6" height="14.6" rx=".4" fill="#dfdfe7" stroke="#9494a2" stroke-width="1.4"/><rect x="2.6" y="2.6" width="10.8" height="10.8" fill="none" stroke="#ececf2" stroke-width="1"/><rect x="3.9" y="3.9" width="8.2" height="8.2" fill="#fff"/></svg>
<div class="t" style="letter-spacing:-0.35px;transform:scaleX(0.9299);transform-origin:0 0;top:489.36px;line-height:18px;color:#2c2c3c;left:885.8px;">No</div>
<div class="t" style="letter-spacing:-0.470px;top:489.36px;line-height:18px;color:#2c2c3c;left:1039.5px;">Meter Min Billing</div>
<div class="t" style="letter-spacing:-0.35px;transform:scaleX(0.9446);transform-origin:0 0;top:489.36px;line-height:18px;color:#2c2c3c;left:1145.8px;">IMTR</div>
<div class="t" style="letter-spacing:-0.35px;transform:scaleX(0.9784);transform-origin:0 0;top:489.36px;line-height:18px;color:#2c2c3c;left:1200.7px;">CO0000078</div>
<div class="t" style="letter-spacing:-0.35px;transform:scaleX(0.9506);transform-origin:0 0;top:489.36px;line-height:18px;color:#2c2c3c;left:1294.5px;">Pink Shoes</div>
<div class="t" style="top:489.36px;line-height:18px;color:#2c2c3c;right:418.4px;">0.000</div>
<div class="t" style="top:489.36px;line-height:18px;color:#2c2c3c;right:340.7px;">0.000</div>
<div class="t" style="top:489.36px;line-height:18px;color:#2c2c3c;right:243.2px;">0.000</div>
<div class="t" style="letter-spacing:-0.419px;top:489.36px;line-height:18px;color:#2c2c3c;left:1687.0px;">Cost Per Copy</div>
<div class="t" style="letter-spacing:-0.412px;top:489.36px;line-height:18px;color:#2c2c3c;left:1823.0px;">PIN0001</div>
<div style="left:792.5px;top:513px;width:1126px;height:26px;background:#ececee"></div>
<div style="left:792.5px;top:513px;width:19px;height:26px;background:#f2f2f5"></div>
<div style="left:811.5px;top:513px;width:69px;height:26px;background:#fff"></div>
<div style="left:1507px;top:513px;width:77.5px;height:26px;background:#fff"></div>
<div style="left:792.5px;top:538px;width:1126px;height:1px;background:#d6d6de"></div>
<svg style="left:839px;top:516px" width="16" height="16" viewBox="0 0 16 16"><rect x=".7" y=".7" width="14.6" height="14.6" rx=".4" fill="#dfdfe7" stroke="#9494a2" stroke-width="1.4"/><rect x="2.6" y="2.6" width="10.8" height="10.8" fill="none" stroke="#ececf2" stroke-width="1"/><rect x="3.9" y="3.9" width="8.2" height="8.2" fill="#fff"/></svg>
<div class="t" style="letter-spacing:-0.35px;transform:scaleX(0.9299);transform-origin:0 0;top:515.58px;line-height:18px;color:#2c2c3c;left:885.8px;">No</div>
<div class="t" style="letter-spacing:-0.470px;top:515.58px;line-height:18px;color:#2c2c3c;left:1039.5px;">Meter Min Billing</div>
<div class="t" style="letter-spacing:-0.35px;transform:scaleX(0.9446);transform-origin:0 0;top:515.58px;line-height:18px;color:#2c2c3c;left:1145.8px;">IMTR</div>
<div class="t" style="letter-spacing:-0.35px;transform:scaleX(0.9784);transform-origin:0 0;top:515.58px;line-height:18px;color:#2c2c3c;left:1200.7px;">CO0000078</div>
<div class="t" style="letter-spacing:-0.35px;transform:scaleX(0.9506);transform-origin:0 0;top:515.58px;line-height:18px;color:#2c2c3c;left:1294.5px;">Pink Shoes</div>
<div class="t" style="top:515.58px;line-height:18px;color:#2c2c3c;right:418.4px;">0.000</div>
<div class="t" style="top:515.58px;line-height:18px;color:#2c2c3c;right:340.7px;">0.000</div>
<div class="t" style="top:515.58px;line-height:18px;color:#2c2c3c;right:243.2px;">0.000</div>
<div class="t" style="letter-spacing:-0.419px;top:515.58px;line-height:18px;color:#2c2c3c;left:1687.0px;">Cost Per Copy</div>
<div class="t" style="letter-spacing:-0.412px;top:515.58px;line-height:18px;color:#2c2c3c;left:1823.0px;">PIN0001</div>
<div style="left:792.5px;top:539px;width:1126px;height:26px;background:#ececee"></div>
<div style="left:792.5px;top:539px;width:19px;height:26px;background:#f2f2f5"></div>
<div style="left:811.5px;top:539px;width:69px;height:26px;background:#fff"></div>
<div style="left:1507px;top:539px;width:77.5px;height:26px;background:#fff"></div>
<div style="left:792.5px;top:564px;width:1126px;height:1px;background:#d6d6de"></div>
<svg style="left:839px;top:542px" width="16" height="16" viewBox="0 0 16 16"><rect x=".7" y=".7" width="14.6" height="14.6" rx=".4" fill="#dfdfe7" stroke="#9494a2" stroke-width="1.4"/><rect x="2.6" y="2.6" width="10.8" height="10.8" fill="none" stroke="#ececf2" stroke-width="1"/><rect x="3.9" y="3.9" width="8.2" height="8.2" fill="#fff"/></svg>
<div class="t" style="letter-spacing:-0.35px;transform:scaleX(0.9299);transform-origin:0 0;top:541.80px;line-height:18px;color:#2c2c3c;left:885.8px;">No</div>
<div class="t" style="letter-spacing:-0.470px;top:541.80px;line-height:18px;color:#2c2c3c;left:1039.5px;">Meter Min Billing</div>
<div class="t" style="letter-spacing:-0.35px;transform:scaleX(0.9446);transform-origin:0 0;top:541.80px;line-height:18px;color:#2c2c3c;left:1145.8px;">IMTR</div>
<div class="t" style="letter-spacing:-0.35px;transform:scaleX(0.9784);transform-origin:0 0;top:541.80px;line-height:18px;color:#2c2c3c;left:1200.7px;">CO0000079</div>
<div class="t" style="letter-spacing:-0.258px;top:541.80px;line-height:18px;color:#2c2c3c;left:1294.5px;">Hope Works (Pty) Ltd</div>
<div class="t" style="top:541.80px;line-height:18px;color:#2c2c3c;right:418.4px;">0.000</div>
<div class="t" style="top:541.80px;line-height:18px;color:#2c2c3c;right:340.7px;">0.000</div>
<div class="t" style="top:541.80px;line-height:18px;color:#2c2c3c;right:243.2px;">0.000</div>
<div class="t" style="letter-spacing:-0.419px;top:541.80px;line-height:18px;color:#2c2c3c;left:1687.0px;">Cost Per Copy</div>
<div class="t" style="letter-spacing:-0.35px;transform:scaleX(0.9437);transform-origin:0 0;top:541.80px;line-height:18px;color:#2c2c3c;left:1823.0px;">HOP001</div>
<div style="left:792.5px;top:565px;width:1126px;height:26px;background:#ececee"></div>
<div style="left:792.5px;top:565px;width:19px;height:26px;background:#f2f2f5"></div>
<div style="left:811.5px;top:565px;width:69px;height:26px;background:#fff"></div>
<div style="left:1507px;top:565px;width:77.5px;height:26px;background:#fff"></div>
<div style="left:792.5px;top:590px;width:1126px;height:1px;background:#d6d6de"></div>
<svg style="left:839px;top:569px" width="16" height="16" viewBox="0 0 16 16"><rect x=".7" y=".7" width="14.6" height="14.6" rx=".4" fill="#dfdfe7" stroke="#9494a2" stroke-width="1.4"/><rect x="2.6" y="2.6" width="10.8" height="10.8" fill="none" stroke="#ececf2" stroke-width="1"/><rect x="3.9" y="3.9" width="8.2" height="8.2" fill="#fff"/></svg>
<div class="t" style="letter-spacing:-0.35px;transform:scaleX(0.9299);transform-origin:0 0;top:568.02px;line-height:18px;color:#2c2c3c;left:885.8px;">No</div>
<div class="t" style="letter-spacing:-0.323px;top:568.02px;line-height:18px;color:#2c2c3c;left:1039.5px;">Mono meter 0</div>
<div class="t" style="letter-spacing:-0.35px;transform:scaleX(0.9094);transform-origin:0 0;top:568.02px;line-height:18px;color:#2c2c3c;left:1145.8px;">MTCH</div>
<div class="t" style="letter-spacing:-0.35px;transform:scaleX(0.9784);transform-origin:0 0;top:568.02px;line-height:18px;color:#2c2c3c;left:1200.7px;">CO0000018</div>
<div class="t" style="letter-spacing:-0.35px;transform:scaleX(0.9765);transform-origin:0 0;top:568.02px;line-height:18px;color:#2c2c3c;left:1294.5px;">Samanthas Diner</div>
<div class="t" style="top:568.02px;line-height:18px;color:#2c2c3c;right:418.4px;">234.910</div>
<div class="t" style="top:568.02px;line-height:18px;color:#2c2c3c;right:340.7px;">23.491</div>
<div class="t" style="top:568.02px;line-height:18px;color:#2c2c3c;right:243.2px;">258.401</div>
<div class="t" style="letter-spacing:-0.419px;top:568.02px;line-height:18px;color:#2c2c3c;left:1687.0px;">Cost Per Copy</div>
<div class="t" style="letter-spacing:-0.35px;transform:scaleX(0.9437);transform-origin:0 0;top:568.02px;line-height:18px;color:#2c2c3c;left:1823.0px;">SAM001</div>
<div style="left:792.5px;top:591px;width:1126px;height:27px;background:#ececee"></div>
<div style="left:792.5px;top:591px;width:19px;height:27px;background:#f2f2f5"></div>
<div style="left:811.5px;top:591px;width:69px;height:27px;background:#fff"></div>
<div style="left:1507px;top:591px;width:77.5px;height:27px;background:#fff"></div>
<div style="left:792.5px;top:617px;width:1126px;height:1px;background:#d6d6de"></div>
<svg style="left:839px;top:595px" width="16" height="16" viewBox="0 0 16 16"><rect x=".7" y=".7" width="14.6" height="14.6" rx=".4" fill="#dfdfe7" stroke="#9494a2" stroke-width="1.4"/><rect x="2.6" y="2.6" width="10.8" height="10.8" fill="none" stroke="#ececf2" stroke-width="1"/><rect x="3.9" y="3.9" width="8.2" height="8.2" fill="#fff"/></svg>
<div class="t" style="letter-spacing:-0.35px;transform:scaleX(0.9299);transform-origin:0 0;top:594.24px;line-height:18px;color:#2c2c3c;left:885.8px;">No</div>
<div class="t" style="letter-spacing:-0.292px;top:594.24px;line-height:18px;color:#2c2c3c;left:1039.5px;">Colour Meter 0</div>
<div class="t" style="letter-spacing:-0.35px;transform:scaleX(0.9094);transform-origin:0 0;top:594.24px;line-height:18px;color:#2c2c3c;left:1145.8px;">MTCH</div>
<div class="t" style="letter-spacing:-0.35px;transform:scaleX(0.9784);transform-origin:0 0;top:594.24px;line-height:18px;color:#2c2c3c;left:1200.7px;">CO0000018</div>
<div class="t" style="letter-spacing:-0.35px;transform:scaleX(0.9765);transform-origin:0 0;top:594.24px;line-height:18px;color:#2c2c3c;left:1294.5px;">Samanthas Diner</div>
<div class="t" style="top:594.24px;line-height:18px;color:#2c2c3c;right:418.4px;">264.274</div>
<div class="t" style="top:594.24px;line-height:18px;color:#2c2c3c;right:340.7px;">26.427</div>
<div class="t" style="top:594.24px;line-height:18px;color:#2c2c3c;right:243.2px;">290.701</div>
<div class="t" style="letter-spacing:-0.419px;top:594.24px;line-height:18px;color:#2c2c3c;left:1687.0px;">Cost Per Copy</div>
<div class="t" style="letter-spacing:-0.35px;transform:scaleX(0.9437);transform-origin:0 0;top:594.24px;line-height:18px;color:#2c2c3c;left:1823.0px;">SAM001</div>
<div style="left:792.5px;top:618px;width:1126px;height:26px;background:#ececee"></div>
<div style="left:792.5px;top:618px;width:19px;height:26px;background:#f2f2f5"></div>
<div style="left:811.5px;top:618px;width:69px;height:26px;background:#fff"></div>
<div style="left:1507px;top:618px;width:77.5px;height:26px;background:#fff"></div>
<div style="left:792.5px;top:643px;width:1126px;height:1px;background:#d6d6de"></div>
<svg style="left:839px;top:621px" width="16" height="16" viewBox="0 0 16 16"><rect x=".7" y=".7" width="14.6" height="14.6" rx=".4" fill="#dfdfe7" stroke="#9494a2" stroke-width="1.4"/><rect x="2.6" y="2.6" width="10.8" height="10.8" fill="none" stroke="#ececf2" stroke-width="1"/><rect x="3.9" y="3.9" width="8.2" height="8.2" fill="#fff"/></svg>
<div class="t" style="letter-spacing:-0.35px;transform:scaleX(0.9299);transform-origin:0 0;top:620.46px;line-height:18px;color:#2c2c3c;left:885.8px;">No</div>
<div class="t" style="letter-spacing:-0.35px;transform:scaleX(0.9663);transform-origin:0 0;top:620.46px;line-height:18px;color:#2c2c3c;left:1039.5px;">Colour meter 5...</div>
<div class="t" style="letter-spacing:-0.35px;transform:scaleX(0.9094);transform-origin:0 0;top:620.46px;line-height:18px;color:#2c2c3c;left:1145.8px;">MTCH</div>
<div class="t" style="letter-spacing:-0.35px;transform:scaleX(0.9784);transform-origin:0 0;top:620.46px;line-height:18px;color:#2c2c3c;left:1200.7px;">CO0000018</div>
<div class="t" style="letter-spacing:-0.35px;transform:scaleX(0.9765);transform-origin:0 0;top:620.46px;line-height:18px;color:#2c2c3c;left:1294.5px;">Samanthas Diner</div>
<div class="t" style="top:620.46px;line-height:18px;color:#2c2c3c;right:418.4px;">14.682</div>
<div class="t" style="top:620.46px;line-height:18px;color:#2c2c3c;right:340.7px;">1.468</div>
<div class="t" style="top:620.46px;line-height:18px;color:#2c2c3c;right:243.2px;">16.150</div>
<div class="t" style="letter-spacing:-0.419px;top:620.46px;line-height:18px;color:#2c2c3c;left:1687.0px;">Cost Per Copy</div>
<div class="t" style="letter-spacing:-0.35px;transform:scaleX(0.9437);transform-origin:0 0;top:620.46px;line-height:18px;color:#2c2c3c;left:1823.0px;">SAM001</div>
<div style="left:792.5px;top:644px;width:1126px;height:26px;background:#ececee"></div>
<div style="left:792.5px;top:644px;width:19px;height:26px;background:#f2f2f5"></div>
<div style="left:811.5px;top:644px;width:69px;height:26px;background:#fff"></div>
<div style="left:1507px;top:644px;width:77.5px;height:26px;background:#fff"></div>
<div style="left:792.5px;top:669px;width:1126px;height:1px;background:#d6d6de"></div>
<svg style="left:839px;top:647px" width="16" height="16" viewBox="0 0 16 16"><rect x=".7" y=".7" width="14.6" height="14.6" rx=".4" fill="#dfdfe7" stroke="#9494a2" stroke-width="1.4"/><rect x="2.6" y="2.6" width="10.8" height="10.8" fill="none" stroke="#ececf2" stroke-width="1"/><rect x="3.9" y="3.9" width="8.2" height="8.2" fill="#fff"/></svg>
<div class="t" style="letter-spacing:-0.35px;transform:scaleX(0.9299);transform-origin:0 0;top:646.68px;line-height:18px;color:#2c2c3c;left:885.8px;">No</div>
<div class="t" style="letter-spacing:-0.270px;top:646.68px;line-height:18px;color:#2c2c3c;left:1039.5px;">Mono meter 5...</div>
<div class="t" style="letter-spacing:-0.35px;transform:scaleX(0.9094);transform-origin:0 0;top:646.68px;line-height:18px;color:#2c2c3c;left:1145.8px;">MTCH</div>
<div class="t" style="letter-spacing:-0.35px;transform:scaleX(0.9784);transform-origin:0 0;top:646.68px;line-height:18px;color:#2c2c3c;left:1200.7px;">CO0000018</div>
<div class="t" style="letter-spacing:-0.35px;transform:scaleX(0.9765);transform-origin:0 0;top:646.68px;line-height:18px;color:#2c2c3c;left:1294.5px;">Samanthas Diner</div>
<div class="t" style="top:646.68px;line-height:18px;color:#2c2c3c;right:418.4px;">18.597</div>
<div class="t" style="top:646.68px;line-height:18px;color:#2c2c3c;right:340.7px;">1.860</div>
<div class="t" style="top:646.68px;line-height:18px;color:#2c2c3c;right:243.2px;">20.457</div>
<div class="t" style="letter-spacing:-0.419px;top:646.68px;line-height:18px;color:#2c2c3c;left:1687.0px;">Cost Per Copy</div>
<div class="t" style="letter-spacing:-0.35px;transform:scaleX(0.9437);transform-origin:0 0;top:646.68px;line-height:18px;color:#2c2c3c;left:1823.0px;">SAM001</div>
<div style="left:792.5px;top:670px;width:1126px;height:26px;background:#ececee"></div>
<div style="left:792.5px;top:670px;width:19px;height:26px;background:#f2f2f5"></div>
<div style="left:811.5px;top:670px;width:69px;height:26px;background:#fff"></div>
<div style="left:1507px;top:670px;width:77.5px;height:26px;background:#fff"></div>
<div style="left:792.5px;top:695px;width:1126px;height:1px;background:#d6d6de"></div>
<svg style="left:839px;top:673px" width="16" height="16" viewBox="0 0 16 16"><rect x=".7" y=".7" width="14.6" height="14.6" rx=".4" fill="#dfdfe7" stroke="#9494a2" stroke-width="1.4"/><rect x="2.6" y="2.6" width="10.8" height="10.8" fill="none" stroke="#ececf2" stroke-width="1"/><rect x="3.9" y="3.9" width="8.2" height="8.2" fill="#fff"/></svg>
<div class="t" style="letter-spacing:-0.35px;transform:scaleX(0.9299);transform-origin:0 0;top:672.90px;line-height:18px;color:#2c2c3c;left:885.8px;">No</div>
<div class="t" style="letter-spacing:-0.292px;top:672.90px;line-height:18px;color:#2c2c3c;left:1039.5px;">Colour Meter 0</div>
<div class="t" style="letter-spacing:-0.35px;transform:scaleX(0.9094);transform-origin:0 0;top:672.90px;line-height:18px;color:#2c2c3c;left:1145.8px;">MTCH</div>
<div class="t" style="letter-spacing:-0.35px;transform:scaleX(0.9784);transform-origin:0 0;top:672.90px;line-height:18px;color:#2c2c3c;left:1200.7px;">CO0000077</div>
<div class="t" style="letter-spacing:-0.35px;transform:scaleX(0.9506);transform-origin:0 0;top:672.90px;line-height:18px;color:#2c2c3c;left:1294.5px;">Pink Shoes</div>
<div class="t" style="top:672.90px;line-height:18px;color:#2c2c3c;right:418.4px;">70.000</div>
<div class="t" style="top:672.90px;line-height:18px;color:#2c2c3c;right:340.7px;">7.000</div>
<div class="t" style="top:672.90px;line-height:18px;color:#2c2c3c;right:243.2px;">77.000</div>
<div class="t" style="letter-spacing:-0.419px;top:672.90px;line-height:18px;color:#2c2c3c;left:1687.0px;">Cost Per Copy</div>
<div class="t" style="letter-spacing:-0.412px;top:672.90px;line-height:18px;color:#2c2c3c;left:1823.0px;">PIN0001</div>
<div style="left:792.5px;top:696px;width:1126px;height:27px;background:#ececee"></div>
<div style="left:792.5px;top:696px;width:19px;height:27px;background:#f2f2f5"></div>
<div style="left:811.5px;top:696px;width:69px;height:27px;background:#fff"></div>
<div style="left:1507px;top:696px;width:77.5px;height:27px;background:#fff"></div>
<div style="left:792.5px;top:722px;width:1126px;height:1px;background:#d6d6de"></div>
<svg style="left:839px;top:700px" width="16" height="16" viewBox="0 0 16 16"><rect x=".7" y=".7" width="14.6" height="14.6" rx=".4" fill="#dfdfe7" stroke="#9494a2" stroke-width="1.4"/><rect x="2.6" y="2.6" width="10.8" height="10.8" fill="none" stroke="#ececf2" stroke-width="1"/><rect x="3.9" y="3.9" width="8.2" height="8.2" fill="#fff"/></svg>
<div class="t" style="letter-spacing:-0.35px;transform:scaleX(0.9299);transform-origin:0 0;top:699.12px;line-height:18px;color:#2c2c3c;left:885.8px;">No</div>
<div class="t" style="letter-spacing:-0.323px;top:699.12px;line-height:18px;color:#2c2c3c;left:1039.5px;">Mono meter 0</div>
<div class="t" style="letter-spacing:-0.35px;transform:scaleX(0.9094);transform-origin:0 0;top:699.12px;line-height:18px;color:#2c2c3c;left:1145.8px;">MTCH</div>
<div class="t" style="letter-spacing:-0.35px;transform:scaleX(0.9784);transform-origin:0 0;top:699.12px;line-height:18px;color:#2c2c3c;left:1200.7px;">CO0000078</div>
<div class="t" style="letter-spacing:-0.35px;transform:scaleX(0.9506);transform-origin:0 0;top:699.12px;line-height:18px;color:#2c2c3c;left:1294.5px;">Pink Shoes</div>
<div class="t" style="top:699.12px;line-height:18px;color:#2c2c3c;right:418.4px;">42.350</div>
<div class="t" style="top:699.12px;line-height:18px;color:#2c2c3c;right:340.7px;">4.235</div>
<div class="t" style="top:699.12px;line-height:18px;color:#2c2c3c;right:243.2px;">46.585</div>
<div class="t" style="letter-spacing:-0.419px;top:699.12px;line-height:18px;color:#2c2c3c;left:1687.0px;">Cost Per Copy</div>
<div class="t" style="letter-spacing:-0.412px;top:699.12px;line-height:18px;color:#2c2c3c;left:1823.0px;">PIN0001</div>
<div style="left:792.5px;top:723px;width:1126px;height:26px;background:#ececee"></div>
<div style="left:792.5px;top:723px;width:19px;height:26px;background:#f2f2f5"></div>
<div style="left:811.5px;top:723px;width:69px;height:26px;background:#fff"></div>
<div style="left:1507px;top:723px;width:77.5px;height:26px;background:#fff"></div>
<div style="left:792.5px;top:748px;width:1126px;height:1px;background:#d6d6de"></div>
<svg style="left:839px;top:726px" width="16" height="16" viewBox="0 0 16 16"><rect x=".7" y=".7" width="14.6" height="14.6" rx=".4" fill="#dfdfe7" stroke="#9494a2" stroke-width="1.4"/><rect x="2.6" y="2.6" width="10.8" height="10.8" fill="none" stroke="#ececf2" stroke-width="1"/><rect x="3.9" y="3.9" width="8.2" height="8.2" fill="#fff"/></svg>
<div class="t" style="letter-spacing:-0.35px;transform:scaleX(0.9299);transform-origin:0 0;top:725.34px;line-height:18px;color:#2c2c3c;left:885.8px;">No</div>
<div class="t" style="letter-spacing:-0.292px;top:725.34px;line-height:18px;color:#2c2c3c;left:1039.5px;">Colour Meter 0</div>
<div class="t" style="letter-spacing:-0.35px;transform:scaleX(0.9094);transform-origin:0 0;top:725.34px;line-height:18px;color:#2c2c3c;left:1145.8px;">MTCH</div>
<div class="t" style="letter-spacing:-0.35px;transform:scaleX(0.9784);transform-origin:0 0;top:725.34px;line-height:18px;color:#2c2c3c;left:1200.7px;">CO0000078</div>
<div class="t" style="letter-spacing:-0.35px;transform:scaleX(0.9506);transform-origin:0 0;top:725.34px;line-height:18px;color:#2c2c3c;left:1294.5px;">Pink Shoes</div>
<div class="t" style="top:725.34px;line-height:18px;color:#2c2c3c;right:418.4px;">163.350</div>
<div class="t" style="top:725.34px;line-height:18px;color:#2c2c3c;right:340.7px;">16.335</div>
<div class="t" style="top:725.34px;line-height:18px;color:#2c2c3c;right:243.2px;">179.685</div>
<div class="t" style="letter-spacing:-0.419px;top:725.34px;line-height:18px;color:#2c2c3c;left:1687.0px;">Cost Per Copy</div>
<div class="t" style="letter-spacing:-0.412px;top:725.34px;line-height:18px;color:#2c2c3c;left:1823.0px;">PIN0001</div>
<div style="left:792.5px;top:749px;width:1126px;height:26px;background:#ececee"></div>
<div style="left:792.5px;top:749px;width:19px;height:26px;background:#f2f2f5"></div>
<div style="left:811.5px;top:749px;width:69px;height:26px;background:#fff"></div>
<div style="left:1507px;top:749px;width:77.5px;height:26px;background:#fff"></div>
<div style="left:792.5px;top:774px;width:1126px;height:1px;background:#d6d6de"></div>
<svg style="left:839px;top:752px" width="16" height="16" viewBox="0 0 16 16"><rect x=".7" y=".7" width="14.6" height="14.6" rx=".4" fill="#dfdfe7" stroke="#9494a2" stroke-width="1.4"/><rect x="2.6" y="2.6" width="10.8" height="10.8" fill="none" stroke="#ececf2" stroke-width="1"/><rect x="3.9" y="3.9" width="8.2" height="8.2" fill="#fff"/></svg>
<div class="t" style="letter-spacing:-0.35px;transform:scaleX(0.9299);transform-origin:0 0;top:751.56px;line-height:18px;color:#2c2c3c;left:885.8px;">No</div>
<div class="t" style="letter-spacing:-0.292px;top:751.56px;line-height:18px;color:#2c2c3c;left:1039.5px;">Colour Meter 0</div>
<div class="t" style="letter-spacing:-0.35px;transform:scaleX(0.9094);transform-origin:0 0;top:751.56px;line-height:18px;color:#2c2c3c;left:1145.8px;">MTCH</div>
<div class="t" style="letter-spacing:-0.35px;transform:scaleX(0.9784);transform-origin:0 0;top:751.56px;line-height:18px;color:#2c2c3c;left:1200.7px;">CO0000079</div>
<div class="t" style="letter-spacing:-0.258px;top:751.56px;line-height:18px;color:#2c2c3c;left:1294.5px;">Hope Works (Pty) Ltd</div>
<div class="t" style="top:751.56px;line-height:18px;color:#2c2c3c;right:418.4px;">110.000</div>
<div class="t" style="top:751.56px;line-height:18px;color:#2c2c3c;right:340.7px;">11.000</div>
<div class="t" style="top:751.56px;line-height:18px;color:#2c2c3c;right:243.2px;">121.000</div>
<div class="t" style="letter-spacing:-0.419px;top:751.56px;line-height:18px;color:#2c2c3c;left:1687.0px;">Cost Per Copy</div>
<div class="t" style="letter-spacing:-0.35px;transform:scaleX(0.9437);transform-origin:0 0;top:751.56px;line-height:18px;color:#2c2c3c;left:1823.0px;">HOP001</div>
<div style="left:811.0px;top:271px;width:1px;height:504px;background:#d6d6de"></div>
<div style="left:880.0px;top:271px;width:1px;height:504px;background:#d6d6de"></div>
<div style="left:1033.5px;top:271px;width:1px;height:504px;background:#d6d6de"></div>
<div style="left:1140.0px;top:271px;width:1px;height:504px;background:#d6d6de"></div>
<div style="left:1195.0px;top:271px;width:1px;height:504px;background:#d6d6de"></div>
<div style="left:1288.8px;top:271px;width:1px;height:504px;background:#d6d6de"></div>
<div style="left:1433.0px;top:271px;width:1px;height:504px;background:#d6d6de"></div>
<div style="left:1506.5px;top:271px;width:1px;height:504px;background:#d6d6de"></div>
<div style="left:1584.0px;top:271px;width:1px;height:504px;background:#d6d6de"></div>
<div style="left:1681.5px;top:271px;width:1px;height:504px;background:#d6d6de"></div>
<div style="left:1817.5px;top:271px;width:1px;height:504px;background:#d6d6de"></div>
<svg style="left:800px;top:284.5px" width="5.5" height="10" viewBox="0 0 5.5 10"><path d="M0 0 L5.5 5 L0 10Z" fill="#1a1a24"/></svg>
<div style="left:792.5px;top:936px;width:1126px;height:37.5px;background:linear-gradient(#ebebef,#e3e3e8);border-top:1px solid #cdcdd5"></div>
<div style="left:1197.7px;top:940.3px;width:91.0px;height:30.2px;background:#fff;border:1px solid #d0d0d8"></div>
<div class="t" style="top:946.95px;line-height:18px;color:#2c2c3c;right:637.6px;">0 of 19</div>
<div style="left:1435.2px;top:940.3px;width:70.5px;height:30.2px;background:#fff;border:1px solid #d0d0d8"></div>
<div class="t" style="top:946.95px;line-height:18px;color:#2c2c3c;right:420.6px;">0.00</div>
<div style="left:1509.2px;top:940.3px;width:74.09999999999991px;height:30.2px;background:#fff;border:1px solid #d0d0d8"></div>
<div class="t" style="top:946.95px;line-height:18px;color:#2c2c3c;right:343.0px;">0.00</div>
<div style="left:1586.8px;top:940.3px;width:94.0px;height:30.2px;background:#fff;border:1px solid #d0d0d8"></div>
<div class="t" style="top:946.95px;line-height:18px;color:#2c2c3c;right:245.5px;">0.00</div>
<div style="left:792.5px;top:973.5px;width:1126px;height:20px;background:#f6f6f8"></div>
<div style="left:813.7px;top:980.3px;width:915px;height:8.5px;border:1px solid #b9b9c3;border-radius:4.5px;background:linear-gradient(#e4e4ea,#d2d2da)"></div>
<svg style="left:800px;top:979.5px" width="5" height="9" viewBox="0 0 5 9"><path d="M5 0 L0 4.5 L5 9Z" fill="#7d7d8a"/></svg>
<svg style="left:1905.5px;top:979.5px" width="5" height="9" viewBox="0 0 5 9"><path d="M0 0 L5 4.5 L0 9Z" fill="#7d7d8a"/></svg>
<div style="left:0px;top:996px;width:1920px;height:34px;background:linear-gradient(#e3e3e8,#d6d6dc 55%,#c8c8d0)"></div>
<div style="left:0px;top:996px;width:1920px;height:1px;background:#f4f4f6"></div>
<div class="t" style="letter-spacing:-0.495px;top:1004.65px;line-height:18px;color:#37374a;left:9.5px;">Open Windows</div>
<svg style="left:103.5px;top:1011.5px" width="8" height="5" viewBox="0 0 8 5"><path d="M0 0 H8 L4 5Z" fill="#33333f"/></svg>
<div style="left:1471.5px;top:1000px;width:1px;height:26px;background:#bcbcc6"></div>
<div style="left:1472.5px;top:1000px;width:1px;height:26px;background:#ededf1"></div>
<div style="left:1573.8px;top:1000px;width:1px;height:26px;background:#bcbcc6"></div>
<div style="left:1574.8px;top:1000px;width:1px;height:26px;background:#ededf1"></div>
<div style="left:1665.0px;top:1000px;width:1px;height:26px;background:#bcbcc6"></div>
<div style="left:1666.0px;top:1000px;width:1px;height:26px;background:#ededf1"></div>
<div style="left:1787.5px;top:1000px;width:1px;height:26px;background:#bcbcc6"></div>
<div style="left:1788.5px;top:1000px;width:1px;height:26px;background:#ededf1"></div>
<div class="t" style="letter-spacing:-0.388px;top:1004.65px;line-height:18px;color:#33333f;left:1484.0px;">User : Bianca</div>
<div class="t" style="letter-spacing:-0.038px;top:1004.65px;line-height:18px;color:#33333f;left:1585.0px;">21/02/2023</div>
<div class="t" style="letter-spacing:0.048px;top:1004.65px;line-height:18px;color:#33333f;left:1675.5px;">Version : 2.5.1.4</div>
<div class="t" style="letter-spacing:-0.35px;transform:scaleX(0.9732);transform-origin:0 0;top:1004.65px;line-height:18px;color:#33333f;left:1798.0px;">Example Company</div>
<div style="left:713px;top:453px;width:514.5px;height:189.5px;background:#fff;border:1px solid #6f6f6f;box-shadow:0 4px 14px rgba(0,0,0,.38),0 0 3px rgba(0,0,0,.25)"></div>
<div style="left:714px;top:589px;width:512.5px;height:52.5px;background:#f0f0f0"></div>
<div class="t" style="letter-spacing:0.162px;top:463.80px;line-height:18px;font-size:15px;color:#000;left:724.5px;">Input validation</div>
<svg style="left:1200px;top:467px" width="12" height="12" viewBox="0 0 12 12"><path d="M0.3 0.3 L11.7 11.7 M11.7 0.3 L0.3 11.7" stroke="#979797" stroke-width="1"/></svg>
<svg style="left:741.8px;top:521.7px" width="37.8" height="37.8" viewBox="0 0 39 39"><circle cx="19.5" cy="19.5" r="19" fill="#0768c4"/><circle cx="19.5" cy="19.5" r="18.3" fill="none" stroke="#0a55a0" stroke-width="1.3"/><text transform="translate(20.3 31.6) scale(.78 1.04)" font-family="Liberation Sans, sans-serif" font-size="34" fill="#fff" text-anchor="middle">?</text></svg>
<div class="t" style="letter-spacing:0.161px;top:524.15px;line-height:18px;color:#000;left:791.8px;">No contract items are selected. Are you sure you want to close</div>
<div class="t" style="letter-spacing:0.294px;top:540.15px;line-height:18px;color:#000;left:791.8px;">this escalation period with no escalations applied?</div>
<div style="left:1012px;top:603px;width:91px;height:26.5px;background:#e1e1e1;border:2px solid #0078d7"></div>
<div style="left:1115.5px;top:603px;width:91.2px;height:26.5px;background:#e1e1e1;border:1px solid #adadad"></div>
<div class="t" style="letter-spacing:-0.35px;transform:scaleX(0.8321);transform-origin:0 0;top:607.80px;line-height:18px;font-size:15px;color:#000;left:1046.5px;">Yes</div>
<div class="t" style="letter-spacing:-0.344px;top:607.80px;line-height:18px;font-size:15px;color:#000;left:1151.5px;">No</div>
</body></html>
